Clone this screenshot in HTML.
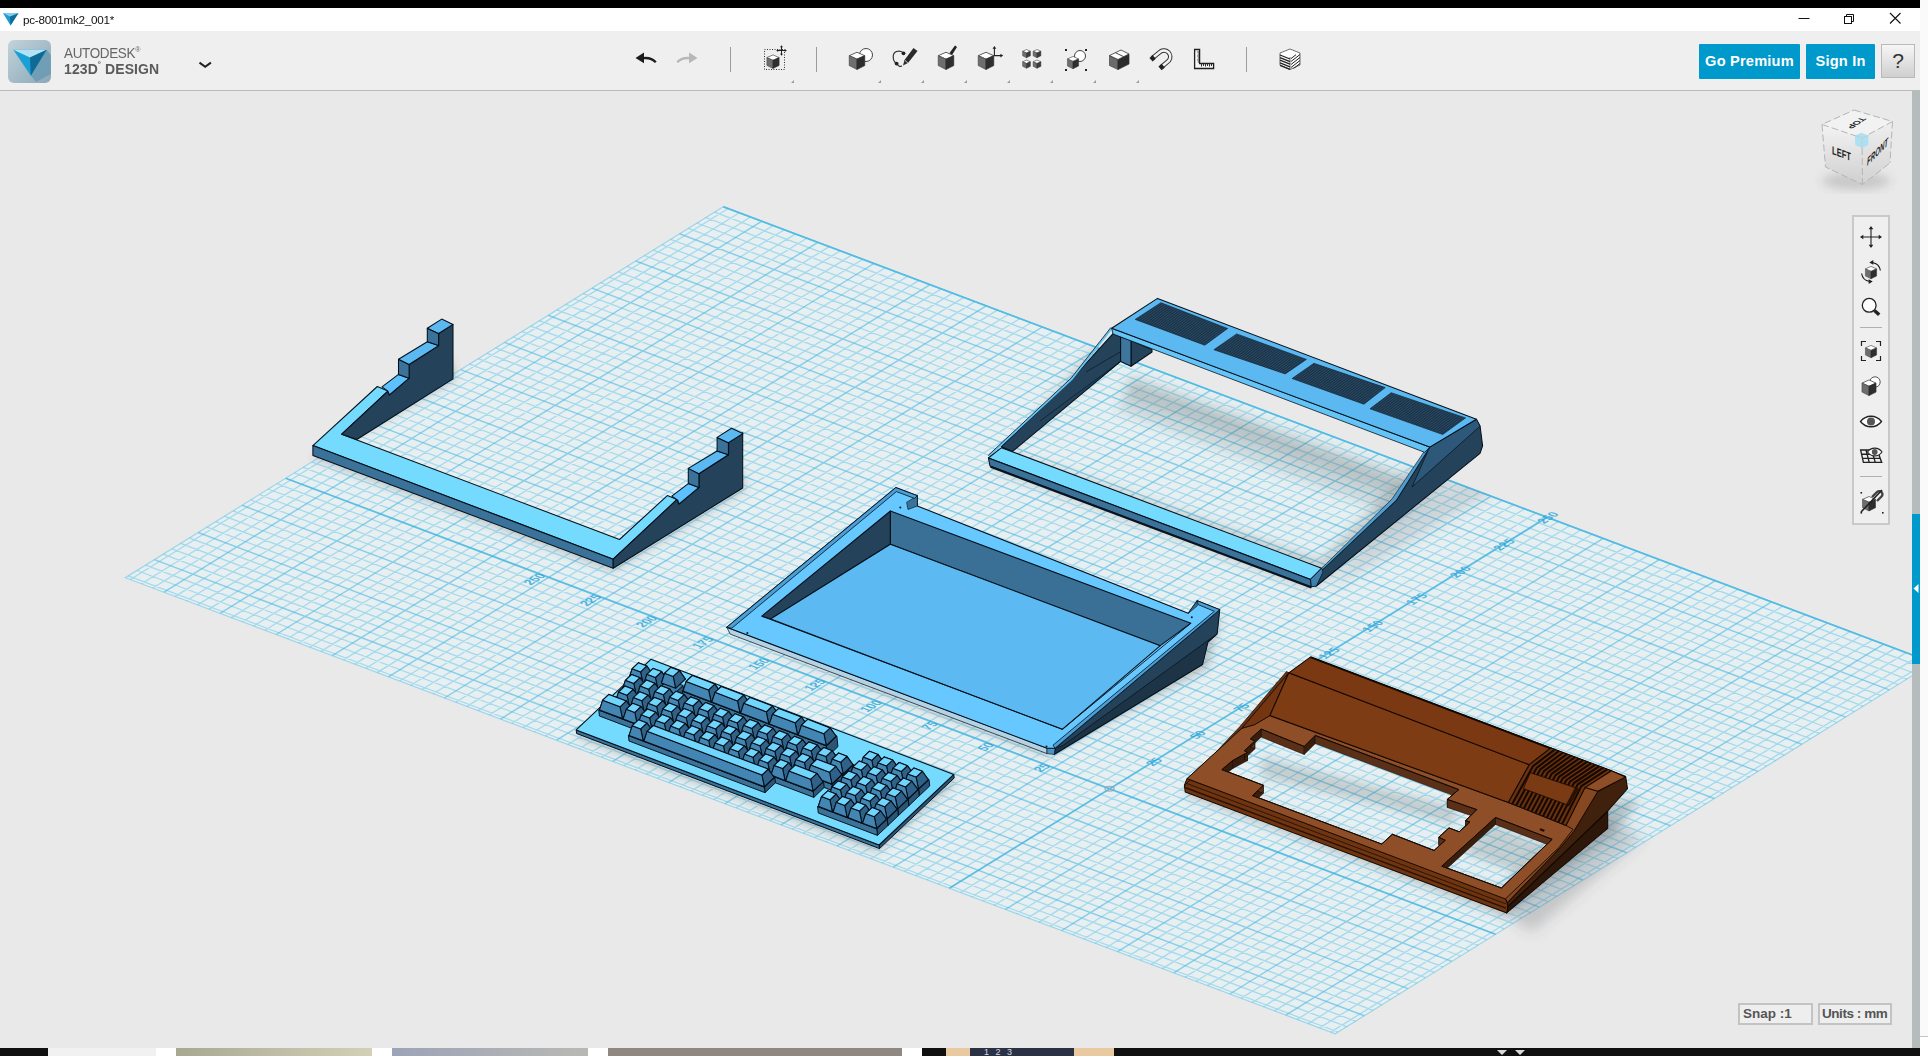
<!DOCTYPE html><html><head><meta charset="utf-8"><title>pc-8001mk2_001*</title><style>
html,body{margin:0;padding:0;}
body{width:1928px;height:1056px;overflow:hidden;position:relative;background:#e9e9e9;font-family:"Liberation Sans",sans-serif;}
.abs{position:absolute;}
#brand1,#brand2,.btn,#help,.sbox,#title .t{will-change:opacity;opacity:.999;}
#blackbar{left:0;top:0;width:1920px;height:8px;background:#000;}
#rstrip{left:1920px;top:0;width:8px;height:1056px;background:#fafafa;}
#title{left:0;top:8px;width:1920px;height:23px;background:#fff;}
#title .t{position:absolute;left:23px;top:5px;font-size:11.7px;color:#111;letter-spacing:-0.25px;}
#toolbar{left:0;top:31px;width:1920px;height:59px;background:#efefef;border-bottom:1px solid #bcbcbc;}
#brand1{left:64px;top:45px;font-size:15.5px;color:#666;letter-spacing:-0.4px;line-height:16px;transform:scaleX(.87);transform-origin:left center;}
#brand2{left:64px;top:61px;font-size:14.5px;color:#5a5a5a;font-weight:bold;letter-spacing:0.1px;line-height:16px;transform:scaleX(.965);transform-origin:left center;}
.btn{top:44px;height:35px;line-height:34px;background:#0099cc;color:#fff;font-weight:bold;font-size:14.6px;text-align:center;border-radius:1px;letter-spacing:0.2px;}
#help{left:1881px;top:44px;width:32px;height:32px;border:1px solid #b9b9b9;background:linear-gradient(#f7f7f7,#cfcfcf);color:#333;font-size:21px;line-height:32px;text-align:center;}
#scroll{left:1912px;top:91px;width:8px;height:957px;background:#b5bdbc;}
#scroll i{position:absolute;left:0;top:423px;width:8px;height:150px;background:#0099cc;}
#nav{left:1852px;top:215px;width:34px;height:306px;border:2px solid #c9c9c9;background:#efefef;}
.sbox{top:1003px;height:18px;border:2px solid #c3c3c3;background:#efefef;font-size:13.5px;font-weight:bold;color:#555;line-height:18px;text-align:left;padding-left:3px;white-space:nowrap;}
#bottom{left:0;top:1048px;width:1920px;height:8px;background:#101010;overflow:hidden;}
#bottom i{position:absolute;top:0;height:8px;}
.gl{font-family:"Liberation Sans",sans-serif;font-size:5.3px;fill:#2fa8da;fill-opacity:.85;font-weight:bold;}
.vc{font-family:"Liberation Sans",sans-serif;font-weight:bold;fill:#222;}
</style></head><body>
<svg class="abs" style="left:0;top:91px" width="1912" height="957" viewBox="0 91 1912 957">
<defs>
<filter id="b3" x="-20%" y="-20%" width="140%" height="140%"><feGaussianBlur stdDeviation="3"/></filter>
<filter id="b4" x="-20%" y="-20%" width="140%" height="140%"><feGaussianBlur stdDeviation="4"/></filter>
<filter id="b5" x="-20%" y="-20%" width="140%" height="140%"><feGaussianBlur stdDeviation="5"/></filter>
<filter id="b6" x="-20%" y="-20%" width="140%" height="140%"><feGaussianBlur stdDeviation="6"/></filter>
<filter id="b7" x="-20%" y="-20%" width="140%" height="140%"><feGaussianBlur stdDeviation="7"/></filter>
<clipPath id="gclip"><polygon points="723.3,206.7 125.4,577.7 1335.2,1033.8 1933.1,662.8"/></clipPath>
<pattern id="mesh" width="2.4" height="2" patternUnits="userSpaceOnUse" patternTransform="matrix(0.93 0.36 -0.8 0.6 0 0)"><rect width="2.4" height="2" fill="#1a3246"/><circle cx="1.2" cy="1" r="0.55" fill="#416f92"/></pattern>
</defs>
<polygon points="723.3,206.7 125.4,577.7 1335.2,1033.8 1933.1,662.8" fill="#e7eff1"/>
<path d="M1330.7 1032.1L1928.6 661.1M1319.5 1027.9L1917.4 656.9M1308.3 1023.6L1906.1 652.6M1297.1 1019.4L1894.9 648.4M1274.6 1010.9L1872.5 640.0M1263.4 1006.7L1861.3 635.7M1252.2 1002.5L1850.0 631.5M1241.0 998.2L1838.8 627.3M1218.5 989.8L1816.4 618.8M1207.3 985.6L1805.2 614.6M1196.1 981.3L1794.0 610.3M1184.9 977.1L1782.7 606.1M1162.4 968.6L1760.3 597.7M1151.2 964.4L1749.1 593.4M1140.0 960.2L1737.9 589.2M1128.8 955.9L1726.6 585.0M1106.3 947.5L1704.2 576.5M1095.1 943.3L1693.0 572.3M1083.9 939.0L1681.8 568.1M1072.7 934.8L1670.6 563.8M1050.2 926.3L1648.1 555.4M1039.0 922.1L1636.9 551.1M1027.8 917.9L1625.7 546.9M1016.6 913.7L1614.5 542.7M994.2 905.2L1592.0 534.2M982.9 901.0L1580.8 530.0M971.7 896.7L1569.6 525.8M960.5 892.5L1558.4 521.5M938.1 884.0L1535.9 513.1M926.8 879.8L1524.7 508.8M915.6 875.6L1513.5 504.6M904.4 871.4L1502.3 500.4M882.0 862.9L1479.8 491.9M870.8 858.7L1468.6 487.7M859.5 854.4L1457.4 483.5M848.3 850.2L1446.2 479.2M825.9 841.8L1423.7 470.8M814.7 837.5L1412.5 466.5M803.4 833.3L1401.3 462.3M792.2 829.1L1390.1 458.1M769.8 820.6L1367.7 449.6M758.6 816.4L1356.4 445.4M747.3 812.1L1345.2 441.2M736.1 807.9L1334.0 436.9M713.7 799.5L1311.6 428.5M702.5 795.2L1300.3 424.3M691.3 791.0L1289.1 420.0M680.0 786.8L1277.9 415.8M657.6 778.3L1255.5 407.3M646.4 774.1L1244.3 403.1M635.2 769.9L1233.0 398.9M623.9 765.6L1221.8 394.6M601.5 757.2L1199.4 386.2M590.3 752.9L1188.2 382.0M579.1 748.7L1176.9 377.7M567.9 744.5L1165.7 373.5M545.4 736.0L1143.3 365.0M534.2 731.8L1132.1 360.8M523.0 727.6L1120.8 356.6M511.8 723.3L1109.6 352.3M489.3 714.9L1087.2 343.9M478.1 710.6L1076.0 339.7M466.9 706.4L1064.8 335.4M455.7 702.2L1053.5 331.2M433.2 693.7L1031.1 322.7M422.0 689.5L1019.9 318.5M410.8 685.3L1008.7 314.3M399.6 681.0L997.4 310.1M377.1 672.6L975.0 301.6M365.9 668.3L963.8 297.4M354.7 664.1L952.6 293.1M343.5 659.9L941.4 288.9M321.0 651.4L918.9 280.4M309.8 647.2L907.7 276.2M298.6 643.0L896.5 272.0M287.4 638.7L885.3 267.8M265.0 630.3L862.8 259.3M253.7 626.0L851.6 255.1M242.5 621.8L840.4 250.8M231.3 617.6L829.2 246.6M208.9 609.1L806.7 238.2M197.6 604.9L795.5 233.9M186.4 600.7L784.3 229.7M175.2 596.4L773.1 225.5M152.8 588.0L750.6 217.0M141.5 583.8L739.4 212.8M130.3 579.5L728.2 208.5M1338.0 1032.0L128.2 575.9M1346.7 1026.6L136.9 570.5M1355.5 1021.2L145.7 565.1M1373.0 1010.3L163.2 554.2M1381.8 1004.9L172.0 548.8M1390.5 999.5L180.7 543.3M1399.3 994.0L189.5 537.9M1416.8 983.2L207.0 527.1M1425.5 977.7L215.7 521.6M1434.3 972.3L224.5 516.2M1443.0 966.9L233.2 510.8M1460.5 956.0L250.7 499.9M1469.3 950.6L259.5 494.5M1478.0 945.2L268.2 489.0M1486.8 939.7L277.0 483.6M1504.3 928.9L294.5 472.8M1513.0 923.4L303.2 467.3M1521.8 918.0L312.0 461.9M1530.5 912.6L320.7 456.5M1548.0 901.7L338.2 445.6M1556.8 896.3L347.0 440.2M1565.5 890.9L355.7 434.7M1574.3 885.4L364.5 429.3M1591.8 874.6L382.0 418.5M1600.5 869.1L390.7 413.0M1609.3 863.7L399.5 407.6M1618.0 858.3L408.2 402.2M1635.5 847.4L425.7 391.3M1644.3 842.0L434.5 385.9M1653.0 836.6L443.2 380.4M1661.8 831.1L452.0 375.0M1679.3 820.3L469.5 364.2M1688.0 814.8L478.2 358.7M1696.8 809.4L487.0 353.3M1705.5 804.0L495.7 347.9M1723.0 793.1L513.2 337.0M1731.8 787.7L522.0 331.6M1740.5 782.3L530.7 326.1M1749.3 776.8L539.5 320.7M1766.8 766.0L557.0 309.9M1775.5 760.5L565.7 304.4M1784.3 755.1L574.5 299.0M1793.1 749.7L583.2 293.6M1810.6 738.8L600.7 282.7M1819.3 733.4L609.5 277.3M1828.1 728.0L618.3 271.8M1836.8 722.5L627.0 266.4M1854.3 711.7L644.5 255.6M1863.1 706.2L653.3 250.1M1871.8 700.8L662.0 244.7M1880.6 695.4L670.8 239.3M1898.1 684.5L688.3 228.4M1906.8 679.1L697.0 223.0M1915.6 673.7L705.8 217.5M1924.3 668.2L714.5 212.1" stroke="#5cc2e8" stroke-width="1.3" stroke-opacity="0.48" fill="none"/>
<path d="M1285.8 1015.2L1883.7 644.2M1229.7 994.0L1827.6 623.0M1173.7 972.9L1771.5 601.9M1117.6 951.7L1715.4 580.7M1061.5 930.6L1659.3 559.6M1005.4 909.4L1603.2 538.4M893.2 867.1L1491.1 496.2M837.1 846.0L1435.0 475.0M781.0 824.8L1378.9 453.9M724.9 803.7L1322.8 432.7M668.8 782.5L1266.7 411.6M612.7 761.4L1210.6 390.4M556.6 740.2L1154.5 369.3M500.5 719.1L1098.4 348.1M444.4 698.0L1042.3 327.0M388.4 676.8L986.2 305.8M332.3 655.7L930.1 284.7M276.2 634.5L874.0 263.5M220.1 613.4L817.9 242.4M164.0 592.2L761.9 221.2M1364.3 1015.7L154.4 559.6M1408.0 988.6L198.2 532.5M1451.8 961.4L242.0 505.3M1539.3 907.1L329.5 451.0M1583.0 880.0L373.2 423.9M1626.8 852.8L417.0 396.7M1670.5 825.7L460.7 369.6M1714.3 798.5L504.5 342.4M1758.0 771.4L548.2 315.3M1801.8 744.2L592.0 288.1M1845.6 717.1L635.8 261.0M1889.3 689.9L679.5 233.8M1933.1 662.8L723.3 206.7" stroke="#4bbae4" stroke-width="1.45" stroke-opacity="0.62" fill="none"/>
<path d="M949.3 888.3L1547.1 517.3M1495.5 934.3L285.7 478.2" stroke="#42b5e2" stroke-width="1.75" stroke-opacity="0.85" fill="none"/>
<polygon points="723.3,206.7 125.4,577.7 1335.2,1033.8 1933.1,662.8" fill="none" stroke="#5cc2e8" stroke-width="1.2" stroke-opacity="0.55"/>
<path d="M1933.1 662.8L723.3 206.7" stroke="#4bbae4" stroke-width="1.7" stroke-opacity="0.85"/>
<ellipse cx="1109.6" cy="788.8" rx="4.6" ry="2.3" fill="none" stroke="#8fa3b5" stroke-width="1.3" stroke-opacity="0.8"/>
<text transform="matrix(1.7502 -1.0860 2.2437 0.8459 1051.1 766.2)" text-anchor="end" class="gl">25</text>
<text transform="matrix(1.7502 -1.0860 2.2437 0.8459 1158.1 763.4)" text-anchor="middle" class="gl">25</text>
<text transform="matrix(1.7502 -1.0860 2.2437 0.8459 995.0 745.1)" text-anchor="end" class="gl">50</text>
<text transform="matrix(1.7502 -1.0860 2.2437 0.8459 1201.8 736.3)" text-anchor="middle" class="gl">50</text>
<text transform="matrix(1.7502 -1.0860 2.2437 0.8459 938.9 723.9)" text-anchor="end" class="gl">75</text>
<text transform="matrix(1.7502 -1.0860 2.2437 0.8459 1245.6 709.1)" text-anchor="middle" class="gl">75</text>
<text transform="matrix(1.7502 -1.0860 2.2437 0.8459 882.8 702.8)" text-anchor="end" class="gl">100</text>
<text transform="matrix(1.7502 -1.0860 2.2437 0.8459 1289.3 682.0)" text-anchor="middle" class="gl">100</text>
<text transform="matrix(1.7502 -1.0860 2.2437 0.8459 826.7 681.6)" text-anchor="end" class="gl">125</text>
<text transform="matrix(1.7502 -1.0860 2.2437 0.8459 1333.1 654.8)" text-anchor="middle" class="gl">125</text>
<text transform="matrix(1.7502 -1.0860 2.2437 0.8459 770.7 660.5)" text-anchor="end" class="gl">150</text>
<text transform="matrix(1.7502 -1.0860 2.2437 0.8459 1376.8 627.7)" text-anchor="middle" class="gl">150</text>
<text transform="matrix(1.7502 -1.0860 2.2437 0.8459 714.6 639.3)" text-anchor="end" class="gl">175</text>
<text transform="matrix(1.7502 -1.0860 2.2437 0.8459 1420.6 600.5)" text-anchor="middle" class="gl">175</text>
<text transform="matrix(1.7502 -1.0860 2.2437 0.8459 658.5 618.2)" text-anchor="end" class="gl">200</text>
<text transform="matrix(1.7502 -1.0860 2.2437 0.8459 1464.4 573.4)" text-anchor="middle" class="gl">200</text>
<text transform="matrix(1.7502 -1.0860 2.2437 0.8459 602.4 597.0)" text-anchor="end" class="gl">225</text>
<text transform="matrix(1.7502 -1.0860 2.2437 0.8459 1508.1 546.2)" text-anchor="middle" class="gl">225</text>
<text transform="matrix(1.7502 -1.0860 2.2437 0.8459 546.3 575.9)" text-anchor="end" class="gl">250</text>
<text transform="matrix(1.7502 -1.0860 2.2437 0.8459 1551.9 519.1)" text-anchor="middle" class="gl">250</text>
<g>
<g><polygon points="313.0,458.0 613.0,571.0 745.0,490.0 742.0,470.0 620.0,548.0 345.0,444.0 455.0,380.0 452.0,360.0" fill="#4a5258" fill-opacity="0.3" filter="url(#b4)"/></g>
<g clip-path="url(#gclip)"><polygon points="990.0,468.0 1312.0,590.0 1486.0,452.0 1440.0,440.0 1320.0,560.0 1010.0,452.0 1125.0,350.0 1100.0,340.0" fill="#4a5258" fill-opacity="0.22" filter="url(#b5)"/></g>
<g><polygon points="1131.0,376.0 1408.0,476.0 1388.0,512.0 1118.0,410.0" fill="#4a5258" fill-opacity="0.17" filter="url(#b6)"/></g>
<g><polygon points="1131.0,380.0 1406.0,480.0 1398.0,496.0 1126.0,396.0" fill="#4a5258" fill-opacity="0.14" filter="url(#b4)"/></g>
<g clip-path="url(#gclip)"><polygon points="1400.0,505.0 1490.0,470.0 1500.0,488.0 1330.0,590.0" fill="#4a5258" fill-opacity="0.16" filter="url(#b6)"/></g>
<g><polygon points="727.0,634.0 1048.0,756.0 1208.0,668.0 1222.0,615.0 1190.0,640.0 1050.0,740.0" fill="#4a5258" fill-opacity="0.3" filter="url(#b4)"/></g>
<g><polygon points="574.0,736.0 878.0,852.0 958.0,780.0 930.0,770.0 870.0,830.0 590.0,730.0" fill="#4a5258" fill-opacity="0.3" filter="url(#b4)"/></g>
<g clip-path="url(#gclip)"><polygon points="1184.0,794.0 1506.0,917.0 1612.0,835.0 1640.0,800.0 1590.0,800.0 1500.0,890.0 1200.0,780.0" fill="#4a5258" fill-opacity="0.3" filter="url(#b5)"/></g>
<g><polygon points="1606.0,814.0 1642.0,838.0 1532.0,932.0 1503.0,912.0" fill="#4a5258" fill-opacity="0.24" filter="url(#b7)"/></g>
<g><polygon points="1262.0,757.0 1456.0,807.0 1456.0,825.0 1262.0,777.0" fill="#4a5258" fill-opacity="0.22" filter="url(#b4)"/></g>
<g><polygon points="1462.0,852.0 1520.0,874.0 1545.0,846.0 1492.0,824.0" fill="#4a5258" fill-opacity="0.22" filter="url(#b4)"/></g>
</g>
<polygon points="312.9,445.6 377.3,386.5 387.9,391.1 341.7,434.2 619.5,539.5 667.3,495.6 677.1,499.4 613.2,559.2" fill="#74dafe" stroke="#04101a" stroke-width="1.05" stroke-linejoin="round" />
<polygon points="312.9,445.6 613.2,559.2 613.2,568.3 312.9,455.5" fill="#3b7299" stroke="#04101a" stroke-width="1.05" stroke-linejoin="round" />
<polygon points="341.7,434.2 387.9,391.1 389.4,394.8 409.1,378.2 409.1,364.5 438.6,345.6 438.6,333.5 453.0,324.4 453.0,378.9 356.8,439.5" fill="#24425a" stroke="#04101a" stroke-width="1.05" stroke-linejoin="round" />
<polygon points="382.0,386.9 398.5,374.4 409.1,378.2 389.4,394.8 387.9,391.1" fill="#5dc0ff" stroke="#04101a" stroke-width="1.05" stroke-linejoin="round" />
<polygon points="398.5,359.2 409.1,364.5 409.1,378.2 398.5,374.4" fill="#3b7299" stroke="#04101a" stroke-width="1.05" stroke-linejoin="round" />
<polygon points="398.5,359.2 427.3,341.8 438.6,345.6 409.1,364.5" fill="#5cb8f0" stroke="#04101a" stroke-width="1.05" stroke-linejoin="round" />
<polygon points="427.3,328.2 438.6,333.5 438.6,345.6 427.3,341.8" fill="#3b7299" stroke="#04101a" stroke-width="1.05" stroke-linejoin="round" />
<polygon points="441.7,319.1 453.0,324.4 438.6,333.5 427.3,328.2" fill="#5cb8f0" stroke="#04101a" stroke-width="1.05" stroke-linejoin="round" />
<polygon points="613.2,559.2 677.1,499.4 678.6,503.9 699.1,487.3 699.1,473.6 728.6,454.7 728.6,441.8 742.7,432.7 742.7,488.0 613.2,568.3" fill="#24425a" stroke="#04101a" stroke-width="1.05" stroke-linejoin="round" />
<polygon points="671.8,496.1 688.3,483.6 698.9,487.4 679.2,504.0 677.7,500.3" fill="#5dc0ff" stroke="#04101a" stroke-width="1.05" stroke-linejoin="round" />
<polygon points="688.3,468.4 698.9,473.7 698.9,487.4 688.3,483.6" fill="#3b7299" stroke="#04101a" stroke-width="1.05" stroke-linejoin="round" />
<polygon points="688.3,468.4 717.1,451.0 728.4,454.8 698.9,473.7" fill="#5cb8f0" stroke="#04101a" stroke-width="1.05" stroke-linejoin="round" />
<polygon points="717.1,437.4 728.4,442.7 728.4,454.8 717.1,451.0" fill="#3b7299" stroke="#04101a" stroke-width="1.05" stroke-linejoin="round" />
<polygon points="731.5,428.3 742.8,433.6 728.4,442.7 717.1,437.4" fill="#5cb8f0" stroke="#04101a" stroke-width="1.05" stroke-linejoin="round" />
<polygon points="1476.4,419.3 1480.1,426.2 1482.6,445.9 1480.0,453.3 1316.4,586.0 1311.4,586.3 1313.9,577.7 1396.4,500.1 1429.7,447.1" fill="#24425a" stroke="#04101a" stroke-width="1.05" stroke-linejoin="round" />
<polygon points="1429.7,447.1 1476.4,419.3 1480.1,426.2 1412.0,487.0" fill="#2d587a" stroke="#04101a" stroke-width="0.7" stroke-linejoin="round" />
<polygon points="1424.7,450.8 1429.7,447.1 1396.4,500.1 1313.9,577.7 1321.7,568.2 1392.0,499.0" fill="#4f9cd0" stroke="#04101a" stroke-width="0.6" stroke-linejoin="round" />
<polygon points="1113.0,333.6 1120.6,336.8 1120.6,361.4 1012.6,451.4 1001.3,446.7 1072.3,378.5" fill="#24425a" stroke="#04101a" stroke-width="1.05" stroke-linejoin="round" />
<line x1="1120.6" y1="361.4" x2="1040.0" y2="421.0" stroke="#04101a" stroke-width="0.6" />
<line x1="1120.0" y1="352.0" x2="1086.0" y2="372.0" stroke="#04101a" stroke-width="0.6" />
<polyline points="1111.7,328.3 1072.3,378.5 988.9,456.1" fill="none" stroke="#63c4f8" stroke-width="2.0" stroke-linejoin="round" />
<polyline points="1110.9,327.5 1071.3,377.9 988.2,455.4" fill="none" stroke="#04101a" stroke-width="0.8" stroke-linejoin="round" />
<polygon points="1131.0,340.6 1152.0,349.5 1152.0,352.0 1131.0,366.2" fill="#24425a" stroke="#04101a" stroke-width="1.05" stroke-linejoin="round" />
<polygon points="1120.6,336.8 1131.0,340.6 1131.0,366.2 1120.6,361.4" fill="#3d759d" stroke="#04101a" stroke-width="1.05" stroke-linejoin="round" />
<polygon points="1111.7,328.3 1429.7,447.1 1424.7,452.3 1113.0,334.0" fill="#63c4f8" stroke="#04101a" stroke-width="0.8" stroke-linejoin="round" />
<polygon points="1157.5,298.4 1476.4,419.3 1429.7,447.1 1111.7,328.3" fill="#5cb8f0" stroke="#04101a" stroke-width="1.05" stroke-linejoin="round" />
<polygon points="1135.2,319.4 1160.9,302.7 1227.6,328.5 1204.8,345.2" fill="url(#mesh)" stroke="#142838" stroke-width="0.7" stroke-linejoin="round" />
<polygon points="1213.9,349.7 1236.7,333.9 1306.4,359.4 1285.2,373.9" fill="url(#mesh)" stroke="#142838" stroke-width="0.7" stroke-linejoin="round" />
<polygon points="1292.1,378.5 1313.9,363.3 1385.2,387.6 1363.9,404.2" fill="url(#mesh)" stroke="#142838" stroke-width="0.7" stroke-linejoin="round" />
<polygon points="1370.0,408.8 1391.2,392.7 1465.5,417.9 1442.7,434.5" fill="url(#mesh)" stroke="#142838" stroke-width="0.7" stroke-linejoin="round" />
<polygon points="988.4,458.0 1001.5,447.7 1321.7,568.2 1310.5,579.4" fill="#74dafe" stroke="#04101a" stroke-width="1.05" stroke-linejoin="round" />
<polygon points="988.4,458.0 1310.5,579.4 1311.4,586.8 990.0,466.0" fill="#3b7299" stroke="#04101a" stroke-width="1.05" stroke-linejoin="round" />
<line x1="990.5" y1="466.8" x2="1311.4" y2="587.6" stroke="#08141e" stroke-width="2.0" />
<polygon points="1310.5,579.4 1321.7,568.2 1323.0,572.0 1316.4,586.0 1311.4,586.8" fill="#3f7fae" stroke="#04101a" stroke-width="0.7" stroke-linejoin="round" />
<polygon points="1219.7,609.7 1217.0,634.0 1208.0,642.0 1202.6,664.5 1054.2,754.5 1055.1,748.2 1215.2,612.4" fill="#1d3346" stroke="#04101a" stroke-width="1.05" stroke-linejoin="round" />
<polygon points="1215.2,612.4 1219.7,609.7 1217.0,634.0 1063.0,745.5 1055.1,748.2" fill="#24425a" stroke="#04101a" stroke-width="0.7" stroke-linejoin="round" />
<polygon points="726.7,627.3 1047.0,748.2 1047.0,753.6 730.3,634.2" fill="#b4d2e6" stroke="#04101a" stroke-width="0.7" stroke-linejoin="round" />
<polygon points="1047.0,748.2 1055.1,748.2 1054.2,754.5 1047.0,753.6" fill="#4a94c8" stroke="#04101a" stroke-width="0.6" stroke-linejoin="round" />
<polygon points="726.7,627.3 895.8,487.6 917.4,495.7 917.4,506.0 1188.2,613.3 1197.2,600.7 1219.7,609.7 1055.1,748.2 1047.0,748.2" fill="#66c8ff" stroke="#04101a" stroke-width="1.05" stroke-linejoin="round" />
<polygon points="917.4,495.7 917.4,506.0 908.0,509.5 906.6,502.3" fill="#3b7299" stroke="#04101a" stroke-width="0.6" stroke-linejoin="round" />
<polygon points="1188.2,613.3 1197.2,600.7 1197.2,606.0" fill="#3b7299" stroke="#04101a" stroke-width="0.6" stroke-linejoin="round" />
<polygon points="726.7,627.3 895.8,487.6 917.4,495.7 914.5,498.4 896.4,491.6 731.8,628.2" fill="#4c9fd6" stroke="#04101a" stroke-width="0.8" stroke-linejoin="round" />
<polygon points="1197.2,600.7 1219.7,609.7 1055.1,748.2 1053.0,745.2 1214.3,611.3 1198.2,604.6" fill="#4c9fd6" stroke="#04101a" stroke-width="0.8" stroke-linejoin="round" />
<circle cx="900.3" cy="507.4" r="1" fill="#0a1822"/>
<circle cx="1191.8" cy="617.2" r="1" fill="#0a1822"/>
<circle cx="747.4" cy="633.0" r="1" fill="#0a1822"/>
<circle cx="1046.5" cy="746.5" r="1" fill="#0a1822"/>
<polygon points="761.8,616.2 890.4,511.0 890.4,544.3 770.8,618.9" fill="#24425a" stroke="#04101a" stroke-width="1.05" stroke-linejoin="round" />
<polygon points="890.4,511.0 1190.9,623.2 1160.3,645.7 890.4,544.3" fill="#3a7096" stroke="#04101a" stroke-width="1.05" stroke-linejoin="round" />
<polygon points="770.8,618.9 890.4,544.3 1160.3,645.7 1062.3,729.3" fill="#5db9f1" stroke="#04101a" stroke-width="1.05" stroke-linejoin="round" />
<polyline points="761.8,616.2 1062.3,729.3 1190.9,623.2" fill="none" stroke="#04101a" stroke-width="0.9" stroke-linejoin="round" />
<polygon points="879.1,845.0 953.8,774.4 954.2,778.0 879.5,848.6" fill="#2a5577" stroke="#050f18" stroke-width="1.0" stroke-linejoin="round" />
<polygon points="576.2,729.9 879.1,845.0 879.5,848.6 576.6,733.5" fill="#3b7299" stroke="#050f18" stroke-width="1.0" stroke-linejoin="round" />
<polygon points="576.2,729.9 879.1,845.0 953.8,774.4 650.9,659.3" fill="#74dafe" stroke="#050f18" stroke-width="1.05" stroke-linejoin="round" />
<polygon points="673.3,702.5 683.8,692.6 683.1,685.5 672.6,695.4" fill="#2a5577" stroke="#050f18" stroke-width="0.95" stroke-linejoin="round" />
<polygon points="629.0,685.6 673.3,702.5 672.6,695.4 628.3,678.5" fill="#3b7299" stroke="#050f18" stroke-width="0.95" stroke-linejoin="round" />
<polygon points="628.3,678.5 672.6,695.4 683.1,685.5 638.7,668.6" fill="#3f7dab" stroke="#050f18" stroke-width="0.95" stroke-linejoin="round" />
<polygon points="827.5,756.6 837.9,746.7 836.9,736.1 826.4,746.0" fill="#2a5577" stroke="#050f18" stroke-width="0.95" stroke-linejoin="round" />
<polygon points="683.4,701.8 827.5,756.6 826.4,746.0 682.3,691.2" fill="#3b7299" stroke="#050f18" stroke-width="0.95" stroke-linejoin="round" />
<polygon points="682.3,691.2 826.4,746.0 836.9,736.1 692.8,681.3" fill="#3f7dab" stroke="#050f18" stroke-width="0.95" stroke-linejoin="round" />
<polygon points="638.8,669.1 652.9,674.4 646.8,666.0 638.4,662.8" fill="#3c79a6" stroke="#050f18" stroke-width="1.05" stroke-linejoin="round" />
<polygon points="628.9,678.4 638.8,669.1 638.4,662.8 632.2,668.7" fill="#3c79a6" stroke="#050f18" stroke-width="1.05" stroke-linejoin="round" />
<polygon points="643.0,683.7 652.9,674.4 646.8,666.0 640.6,671.9" fill="#2f6189" stroke="#050f18" stroke-width="1.05" stroke-linejoin="round" />
<polygon points="628.9,678.4 643.0,683.7 640.6,671.9 632.2,668.7" fill="#4385b3" stroke="#050f18" stroke-width="1.05" stroke-linejoin="round" />
<polygon points="632.2,668.7 640.6,671.9 646.8,666.0 638.4,662.8" fill="#70d6fd" stroke="#050f18" stroke-width="1.05" stroke-linejoin="round" />
<polygon points="653.6,674.7 667.6,680.0 661.6,671.6 653.1,668.4" fill="#3c79a6" stroke="#050f18" stroke-width="1.05" stroke-linejoin="round" />
<polygon points="643.7,684.0 653.6,674.7 653.1,668.4 646.9,674.3" fill="#3c79a6" stroke="#050f18" stroke-width="1.05" stroke-linejoin="round" />
<polygon points="657.8,689.3 667.6,680.0 661.6,671.6 655.4,677.5" fill="#2f6189" stroke="#050f18" stroke-width="1.05" stroke-linejoin="round" />
<polygon points="643.7,684.0 657.8,689.3 655.4,677.5 646.9,674.3" fill="#4385b3" stroke="#050f18" stroke-width="1.05" stroke-linejoin="round" />
<polygon points="646.9,674.3 655.4,677.5 661.6,671.6 653.1,668.4" fill="#70d6fd" stroke="#050f18" stroke-width="1.05" stroke-linejoin="round" />
<polygon points="671.4,673.6 685.4,679.0 679.4,670.6 670.9,667.4" fill="#3c79a6" stroke="#050f18" stroke-width="1.05" stroke-linejoin="round" />
<polygon points="661.5,682.9 671.4,673.6 670.9,667.4 664.7,673.2" fill="#3c79a6" stroke="#050f18" stroke-width="1.05" stroke-linejoin="round" />
<polygon points="675.6,688.3 685.4,679.0 679.4,670.6 673.2,676.4" fill="#2f6189" stroke="#050f18" stroke-width="1.05" stroke-linejoin="round" />
<polygon points="661.5,682.9 675.6,688.3 673.2,676.4 664.7,673.2" fill="#4385b3" stroke="#050f18" stroke-width="1.05" stroke-linejoin="round" />
<polygon points="664.7,673.2 673.2,676.4 679.4,670.6 670.9,667.4" fill="#70d6fd" stroke="#050f18" stroke-width="1.05" stroke-linejoin="round" />
<polygon points="692.8,681.8 720.9,692.4 714.8,684.1 692.4,675.5" fill="#3c79a6" stroke="#050f18" stroke-width="1.05" stroke-linejoin="round" />
<polygon points="683.0,691.1 692.8,681.8 692.4,675.5 686.2,681.4" fill="#3c79a6" stroke="#050f18" stroke-width="1.05" stroke-linejoin="round" />
<polygon points="711.1,701.8 720.9,692.4 714.8,684.1 708.6,689.9" fill="#2f6189" stroke="#050f18" stroke-width="1.05" stroke-linejoin="round" />
<polygon points="683.0,691.1 711.1,701.8 708.6,689.9 686.2,681.4" fill="#4385b3" stroke="#050f18" stroke-width="1.05" stroke-linejoin="round" />
<polygon points="686.2,681.4 708.6,689.9 714.8,684.1 692.4,675.5" fill="#70d6fd" stroke="#050f18" stroke-width="1.05" stroke-linejoin="round" />
<polygon points="721.6,692.7 749.7,703.4 743.7,695.0 721.2,686.5" fill="#3c79a6" stroke="#050f18" stroke-width="1.05" stroke-linejoin="round" />
<polygon points="711.8,702.0 721.6,692.7 721.2,686.5 715.0,692.3" fill="#3c79a6" stroke="#050f18" stroke-width="1.05" stroke-linejoin="round" />
<polygon points="739.9,712.7 749.7,703.4 743.7,695.0 737.5,700.9" fill="#2f6189" stroke="#050f18" stroke-width="1.05" stroke-linejoin="round" />
<polygon points="711.8,702.0 739.9,712.7 737.5,700.9 715.0,692.3" fill="#4385b3" stroke="#050f18" stroke-width="1.05" stroke-linejoin="round" />
<polygon points="715.0,692.3 737.5,700.9 743.7,695.0 721.2,686.5" fill="#70d6fd" stroke="#050f18" stroke-width="1.05" stroke-linejoin="round" />
<polygon points="750.5,703.7 778.6,714.3 772.5,706.0 750.0,697.4" fill="#3c79a6" stroke="#050f18" stroke-width="1.05" stroke-linejoin="round" />
<polygon points="740.6,713.0 750.5,703.7 750.0,697.4 743.8,703.3" fill="#3c79a6" stroke="#050f18" stroke-width="1.05" stroke-linejoin="round" />
<polygon points="768.7,723.7 778.6,714.3 772.5,706.0 766.3,711.8" fill="#2f6189" stroke="#050f18" stroke-width="1.05" stroke-linejoin="round" />
<polygon points="740.6,713.0 768.7,723.7 766.3,711.8 743.8,703.3" fill="#4385b3" stroke="#050f18" stroke-width="1.05" stroke-linejoin="round" />
<polygon points="743.8,703.3 766.3,711.8 772.5,706.0 750.0,697.4" fill="#70d6fd" stroke="#050f18" stroke-width="1.05" stroke-linejoin="round" />
<polygon points="779.3,714.6 807.4,725.3 801.3,716.9 778.8,708.4" fill="#3c79a6" stroke="#050f18" stroke-width="1.05" stroke-linejoin="round" />
<polygon points="769.4,723.9 779.3,714.6 778.8,708.4 772.6,714.2" fill="#3c79a6" stroke="#050f18" stroke-width="1.05" stroke-linejoin="round" />
<polygon points="797.5,734.6 807.4,725.3 801.3,716.9 795.1,722.8" fill="#2f6189" stroke="#050f18" stroke-width="1.05" stroke-linejoin="round" />
<polygon points="769.4,723.9 797.5,734.6 795.1,722.8 772.6,714.2" fill="#4385b3" stroke="#050f18" stroke-width="1.05" stroke-linejoin="round" />
<polygon points="772.6,714.2 795.1,722.8 801.3,716.9 778.8,708.4" fill="#70d6fd" stroke="#050f18" stroke-width="1.05" stroke-linejoin="round" />
<polygon points="808.1,725.6 836.2,736.2 830.1,727.9 807.7,719.3" fill="#3c79a6" stroke="#050f18" stroke-width="1.05" stroke-linejoin="round" />
<polygon points="798.3,734.9 808.1,725.6 807.7,719.3 801.5,725.2" fill="#3c79a6" stroke="#050f18" stroke-width="1.05" stroke-linejoin="round" />
<polygon points="826.3,745.6 836.2,736.2 830.1,727.9 823.9,733.7" fill="#2f6189" stroke="#050f18" stroke-width="1.05" stroke-linejoin="round" />
<polygon points="798.3,734.9 826.3,745.6 823.9,733.7 801.5,725.2" fill="#4385b3" stroke="#050f18" stroke-width="1.05" stroke-linejoin="round" />
<polygon points="801.5,725.2 823.9,733.7 830.1,727.9 807.7,719.3" fill="#70d6fd" stroke="#050f18" stroke-width="1.05" stroke-linejoin="round" />
<polygon points="843.9,781.1 854.4,771.3 853.7,764.6 843.2,774.4" fill="#2a5577" stroke="#050f18" stroke-width="0.95" stroke-linejoin="round" />
<polygon points="622.2,696.9 843.9,781.1 843.2,774.4 621.5,690.2" fill="#3b7299" stroke="#050f18" stroke-width="0.95" stroke-linejoin="round" />
<polygon points="621.5,690.2 843.2,774.4 853.7,764.6 632.0,680.3" fill="#3f7dab" stroke="#050f18" stroke-width="0.95" stroke-linejoin="round" />
<polygon points="632.0,680.7 646.1,686.1 640.0,677.7 631.6,674.5" fill="#3c79a6" stroke="#050f18" stroke-width="1.05" stroke-linejoin="round" />
<polygon points="622.2,690.0 632.0,680.7 631.6,674.5 625.4,680.3" fill="#3c79a6" stroke="#050f18" stroke-width="1.05" stroke-linejoin="round" />
<polygon points="636.2,695.4 646.1,686.1 640.0,677.7 633.8,683.5" fill="#2f6189" stroke="#050f18" stroke-width="1.05" stroke-linejoin="round" />
<polygon points="622.2,690.0 636.2,695.4 633.8,683.5 625.4,680.3" fill="#4385b3" stroke="#050f18" stroke-width="1.05" stroke-linejoin="round" />
<polygon points="625.4,680.3 633.8,683.5 640.0,677.7 631.6,674.5" fill="#70d6fd" stroke="#050f18" stroke-width="1.05" stroke-linejoin="round" />
<polygon points="646.8,686.3 660.9,691.7 654.8,683.3 646.4,680.1" fill="#3c79a6" stroke="#050f18" stroke-width="1.05" stroke-linejoin="round" />
<polygon points="636.9,695.7 646.8,686.3 646.4,680.1 640.2,686.0" fill="#3c79a6" stroke="#050f18" stroke-width="1.05" stroke-linejoin="round" />
<polygon points="651.0,701.0 660.9,691.7 654.8,683.3 648.6,689.2" fill="#2f6189" stroke="#050f18" stroke-width="1.05" stroke-linejoin="round" />
<polygon points="636.9,695.7 651.0,701.0 648.6,689.2 640.2,686.0" fill="#4385b3" stroke="#050f18" stroke-width="1.05" stroke-linejoin="round" />
<polygon points="640.2,686.0 648.6,689.2 654.8,683.3 646.4,680.1" fill="#70d6fd" stroke="#050f18" stroke-width="1.05" stroke-linejoin="round" />
<polygon points="661.6,692.0 675.6,697.3 669.6,688.9 661.1,685.7" fill="#3c79a6" stroke="#050f18" stroke-width="1.05" stroke-linejoin="round" />
<polygon points="651.7,701.3 661.6,692.0 661.1,685.7 654.9,691.6" fill="#3c79a6" stroke="#050f18" stroke-width="1.05" stroke-linejoin="round" />
<polygon points="665.8,706.6 675.6,697.3 669.6,688.9 663.4,694.8" fill="#2f6189" stroke="#050f18" stroke-width="1.05" stroke-linejoin="round" />
<polygon points="651.7,701.3 665.8,706.6 663.4,694.8 654.9,691.6" fill="#4385b3" stroke="#050f18" stroke-width="1.05" stroke-linejoin="round" />
<polygon points="654.9,691.6 663.4,694.8 669.6,688.9 661.1,685.7" fill="#70d6fd" stroke="#050f18" stroke-width="1.05" stroke-linejoin="round" />
<polygon points="676.4,697.6 690.4,702.9 684.3,694.5 675.9,691.3" fill="#3c79a6" stroke="#050f18" stroke-width="1.05" stroke-linejoin="round" />
<polygon points="666.5,706.9 676.4,697.6 675.9,691.3 669.7,697.2" fill="#3c79a6" stroke="#050f18" stroke-width="1.05" stroke-linejoin="round" />
<polygon points="680.6,712.2 690.4,702.9 684.3,694.5 678.1,700.4" fill="#2f6189" stroke="#050f18" stroke-width="1.05" stroke-linejoin="round" />
<polygon points="666.5,706.9 680.6,712.2 678.1,700.4 669.7,697.2" fill="#4385b3" stroke="#050f18" stroke-width="1.05" stroke-linejoin="round" />
<polygon points="669.7,697.2 678.1,700.4 684.3,694.5 675.9,691.3" fill="#70d6fd" stroke="#050f18" stroke-width="1.05" stroke-linejoin="round" />
<polygon points="691.2,703.2 705.2,708.5 699.1,700.1 690.7,696.9" fill="#3c79a6" stroke="#050f18" stroke-width="1.05" stroke-linejoin="round" />
<polygon points="681.3,712.5 691.2,703.2 690.7,696.9 684.5,702.8" fill="#3c79a6" stroke="#050f18" stroke-width="1.05" stroke-linejoin="round" />
<polygon points="695.3,717.9 705.2,708.5 699.1,700.1 692.9,706.0" fill="#2f6189" stroke="#050f18" stroke-width="1.05" stroke-linejoin="round" />
<polygon points="681.3,712.5 695.3,717.9 692.9,706.0 684.5,702.8" fill="#4385b3" stroke="#050f18" stroke-width="1.05" stroke-linejoin="round" />
<polygon points="684.5,702.8 692.9,706.0 699.1,700.1 690.7,696.9" fill="#70d6fd" stroke="#050f18" stroke-width="1.05" stroke-linejoin="round" />
<polygon points="705.9,708.8 720.0,714.1 713.9,705.8 705.5,702.6" fill="#3c79a6" stroke="#050f18" stroke-width="1.05" stroke-linejoin="round" />
<polygon points="696.1,718.1 705.9,708.8 705.5,702.6 699.3,708.4" fill="#3c79a6" stroke="#050f18" stroke-width="1.05" stroke-linejoin="round" />
<polygon points="710.1,723.5 720.0,714.1 713.9,705.8 707.7,711.6" fill="#2f6189" stroke="#050f18" stroke-width="1.05" stroke-linejoin="round" />
<polygon points="696.1,718.1 710.1,723.5 707.7,711.6 699.3,708.4" fill="#4385b3" stroke="#050f18" stroke-width="1.05" stroke-linejoin="round" />
<polygon points="699.3,708.4 707.7,711.6 713.9,705.8 705.5,702.6" fill="#70d6fd" stroke="#050f18" stroke-width="1.05" stroke-linejoin="round" />
<polygon points="720.7,714.4 734.8,719.8 728.7,711.4 720.3,708.2" fill="#3c79a6" stroke="#050f18" stroke-width="1.05" stroke-linejoin="round" />
<polygon points="710.9,723.7 720.7,714.4 720.3,708.2 714.1,714.0" fill="#3c79a6" stroke="#050f18" stroke-width="1.05" stroke-linejoin="round" />
<polygon points="724.9,729.1 734.8,719.8 728.7,711.4 722.5,717.2" fill="#2f6189" stroke="#050f18" stroke-width="1.05" stroke-linejoin="round" />
<polygon points="710.9,723.7 724.9,729.1 722.5,717.2 714.1,714.0" fill="#4385b3" stroke="#050f18" stroke-width="1.05" stroke-linejoin="round" />
<polygon points="714.1,714.0 722.5,717.2 728.7,711.4 720.3,708.2" fill="#70d6fd" stroke="#050f18" stroke-width="1.05" stroke-linejoin="round" />
<polygon points="735.5,720.0 749.6,725.4 743.5,717.0 735.0,713.8" fill="#3c79a6" stroke="#050f18" stroke-width="1.05" stroke-linejoin="round" />
<polygon points="725.6,729.4 735.5,720.0 735.0,713.8 728.8,719.7" fill="#3c79a6" stroke="#050f18" stroke-width="1.05" stroke-linejoin="round" />
<polygon points="739.7,734.7 749.6,725.4 743.5,717.0 737.3,722.9" fill="#2f6189" stroke="#050f18" stroke-width="1.05" stroke-linejoin="round" />
<polygon points="725.6,729.4 739.7,734.7 737.3,722.9 728.8,719.7" fill="#4385b3" stroke="#050f18" stroke-width="1.05" stroke-linejoin="round" />
<polygon points="728.8,719.7 737.3,722.9 743.5,717.0 735.0,713.8" fill="#70d6fd" stroke="#050f18" stroke-width="1.05" stroke-linejoin="round" />
<polygon points="750.3,725.7 764.3,731.0 758.2,722.6 749.8,719.4" fill="#3c79a6" stroke="#050f18" stroke-width="1.05" stroke-linejoin="round" />
<polygon points="740.4,735.0 750.3,725.7 749.8,719.4 743.6,725.3" fill="#3c79a6" stroke="#050f18" stroke-width="1.05" stroke-linejoin="round" />
<polygon points="754.5,740.3 764.3,731.0 758.2,722.6 752.0,728.5" fill="#2f6189" stroke="#050f18" stroke-width="1.05" stroke-linejoin="round" />
<polygon points="740.4,735.0 754.5,740.3 752.0,728.5 743.6,725.3" fill="#4385b3" stroke="#050f18" stroke-width="1.05" stroke-linejoin="round" />
<polygon points="743.6,725.3 752.0,728.5 758.2,722.6 749.8,719.4" fill="#70d6fd" stroke="#050f18" stroke-width="1.05" stroke-linejoin="round" />
<polygon points="765.1,731.3 779.1,736.6 773.0,728.2 764.6,725.0" fill="#3c79a6" stroke="#050f18" stroke-width="1.05" stroke-linejoin="round" />
<polygon points="755.2,740.6 765.1,731.3 764.6,725.0 758.4,730.9" fill="#3c79a6" stroke="#050f18" stroke-width="1.05" stroke-linejoin="round" />
<polygon points="769.3,745.9 779.1,736.6 773.0,728.2 766.8,734.1" fill="#2f6189" stroke="#050f18" stroke-width="1.05" stroke-linejoin="round" />
<polygon points="755.2,740.6 769.3,745.9 766.8,734.1 758.4,730.9" fill="#4385b3" stroke="#050f18" stroke-width="1.05" stroke-linejoin="round" />
<polygon points="758.4,730.9 766.8,734.1 773.0,728.2 764.6,725.0" fill="#70d6fd" stroke="#050f18" stroke-width="1.05" stroke-linejoin="round" />
<polygon points="779.8,736.9 793.9,742.2 787.8,733.9 779.4,730.7" fill="#3c79a6" stroke="#050f18" stroke-width="1.05" stroke-linejoin="round" />
<polygon points="770.0,746.2 779.8,736.9 779.4,730.7 773.2,736.5" fill="#3c79a6" stroke="#050f18" stroke-width="1.05" stroke-linejoin="round" />
<polygon points="784.0,751.6 793.9,742.2 787.8,733.9 781.6,739.7" fill="#2f6189" stroke="#050f18" stroke-width="1.05" stroke-linejoin="round" />
<polygon points="770.0,746.2 784.0,751.6 781.6,739.7 773.2,736.5" fill="#4385b3" stroke="#050f18" stroke-width="1.05" stroke-linejoin="round" />
<polygon points="773.2,736.5 781.6,739.7 787.8,733.9 779.4,730.7" fill="#70d6fd" stroke="#050f18" stroke-width="1.05" stroke-linejoin="round" />
<polygon points="794.6,742.5 808.7,747.8 802.6,739.5 794.2,736.3" fill="#3c79a6" stroke="#050f18" stroke-width="1.05" stroke-linejoin="round" />
<polygon points="784.8,751.8 794.6,742.5 794.2,736.3 788.0,742.1" fill="#3c79a6" stroke="#050f18" stroke-width="1.05" stroke-linejoin="round" />
<polygon points="798.8,757.2 808.7,747.8 802.6,739.5 796.4,745.3" fill="#2f6189" stroke="#050f18" stroke-width="1.05" stroke-linejoin="round" />
<polygon points="784.8,751.8 798.8,757.2 796.4,745.3 788.0,742.1" fill="#4385b3" stroke="#050f18" stroke-width="1.05" stroke-linejoin="round" />
<polygon points="788.0,742.1 796.4,745.3 802.6,739.5 794.2,736.3" fill="#70d6fd" stroke="#050f18" stroke-width="1.05" stroke-linejoin="round" />
<polygon points="809.4,748.1 823.5,753.5 817.4,745.1 809.0,741.9" fill="#3c79a6" stroke="#050f18" stroke-width="1.05" stroke-linejoin="round" />
<polygon points="799.5,757.4 809.4,748.1 809.0,741.9 802.8,747.7" fill="#3c79a6" stroke="#050f18" stroke-width="1.05" stroke-linejoin="round" />
<polygon points="813.6,762.8 823.5,753.5 817.4,745.1 811.2,750.9" fill="#2f6189" stroke="#050f18" stroke-width="1.05" stroke-linejoin="round" />
<polygon points="799.5,757.4 813.6,762.8 811.2,750.9 802.8,747.7" fill="#4385b3" stroke="#050f18" stroke-width="1.05" stroke-linejoin="round" />
<polygon points="802.8,747.7 811.2,750.9 817.4,745.1 809.0,741.9" fill="#70d6fd" stroke="#050f18" stroke-width="1.05" stroke-linejoin="round" />
<polygon points="824.2,753.7 838.2,759.1 832.2,750.7 823.7,747.5" fill="#3c79a6" stroke="#050f18" stroke-width="1.05" stroke-linejoin="round" />
<polygon points="814.3,763.1 824.2,753.7 823.7,747.5 817.5,753.4" fill="#3c79a6" stroke="#050f18" stroke-width="1.05" stroke-linejoin="round" />
<polygon points="828.4,768.4 838.2,759.1 832.2,750.7 826.0,756.6" fill="#2f6189" stroke="#050f18" stroke-width="1.05" stroke-linejoin="round" />
<polygon points="814.3,763.1 828.4,768.4 826.0,756.6 817.5,753.4" fill="#4385b3" stroke="#050f18" stroke-width="1.05" stroke-linejoin="round" />
<polygon points="817.5,753.4 826.0,756.6 832.2,750.7 823.7,747.5" fill="#70d6fd" stroke="#050f18" stroke-width="1.05" stroke-linejoin="round" />
<polygon points="839.0,759.4 853.0,764.7 846.9,756.3 838.5,753.1" fill="#3c79a6" stroke="#050f18" stroke-width="1.05" stroke-linejoin="round" />
<polygon points="829.1,768.7 839.0,759.4 838.5,753.1 832.3,759.0" fill="#3c79a6" stroke="#050f18" stroke-width="1.05" stroke-linejoin="round" />
<polygon points="843.2,774.0 853.0,764.7 846.9,756.3 840.7,762.2" fill="#2f6189" stroke="#050f18" stroke-width="1.05" stroke-linejoin="round" />
<polygon points="829.1,768.7 843.2,774.0 840.7,762.2 832.3,759.0" fill="#4385b3" stroke="#050f18" stroke-width="1.05" stroke-linejoin="round" />
<polygon points="832.3,759.0 840.7,762.2 846.9,756.3 838.5,753.1" fill="#70d6fd" stroke="#050f18" stroke-width="1.05" stroke-linejoin="round" />
<polygon points="832.6,790.7 843.1,780.8 842.5,774.5 832.0,784.4" fill="#2a5577" stroke="#050f18" stroke-width="0.95" stroke-linejoin="round" />
<polygon points="615.3,708.2 832.6,790.7 832.0,784.4 614.7,701.9" fill="#3b7299" stroke="#050f18" stroke-width="0.95" stroke-linejoin="round" />
<polygon points="614.7,701.9 832.0,784.4 842.5,774.5 625.2,692.0" fill="#3f7dab" stroke="#050f18" stroke-width="0.95" stroke-linejoin="round" />
<polygon points="625.2,692.4 639.3,697.7 633.2,689.3 624.8,686.1" fill="#3c79a6" stroke="#050f18" stroke-width="1.05" stroke-linejoin="round" />
<polygon points="615.4,701.7 625.2,692.4 624.8,686.1 618.6,692.0" fill="#3c79a6" stroke="#050f18" stroke-width="1.05" stroke-linejoin="round" />
<polygon points="629.4,707.0 639.3,697.7 633.2,689.3 627.0,695.2" fill="#2f6189" stroke="#050f18" stroke-width="1.05" stroke-linejoin="round" />
<polygon points="615.4,701.7 629.4,707.0 627.0,695.2 618.6,692.0" fill="#4385b3" stroke="#050f18" stroke-width="1.05" stroke-linejoin="round" />
<polygon points="618.6,692.0 627.0,695.2 633.2,689.3 624.8,686.1" fill="#70d6fd" stroke="#050f18" stroke-width="1.05" stroke-linejoin="round" />
<polygon points="640.0,698.0 654.1,703.3 648.0,695.0 639.6,691.8" fill="#3c79a6" stroke="#050f18" stroke-width="1.05" stroke-linejoin="round" />
<polygon points="630.2,707.3 640.0,698.0 639.6,691.8 633.4,697.6" fill="#3c79a6" stroke="#050f18" stroke-width="1.05" stroke-linejoin="round" />
<polygon points="644.2,712.7 654.1,703.3 648.0,695.0 641.8,700.8" fill="#2f6189" stroke="#050f18" stroke-width="1.05" stroke-linejoin="round" />
<polygon points="630.2,707.3 644.2,712.7 641.8,700.8 633.4,697.6" fill="#4385b3" stroke="#050f18" stroke-width="1.05" stroke-linejoin="round" />
<polygon points="633.4,697.6 641.8,700.8 648.0,695.0 639.6,691.8" fill="#70d6fd" stroke="#050f18" stroke-width="1.05" stroke-linejoin="round" />
<polygon points="654.8,703.6 668.9,709.0 662.8,700.6 654.4,697.4" fill="#3c79a6" stroke="#050f18" stroke-width="1.05" stroke-linejoin="round" />
<polygon points="644.9,712.9 654.8,703.6 654.4,697.4 648.2,703.2" fill="#3c79a6" stroke="#050f18" stroke-width="1.05" stroke-linejoin="round" />
<polygon points="659.0,718.3 668.9,709.0 662.8,700.6 656.6,706.4" fill="#2f6189" stroke="#050f18" stroke-width="1.05" stroke-linejoin="round" />
<polygon points="644.9,712.9 659.0,718.3 656.6,706.4 648.2,703.2" fill="#4385b3" stroke="#050f18" stroke-width="1.05" stroke-linejoin="round" />
<polygon points="648.2,703.2 656.6,706.4 662.8,700.6 654.4,697.4" fill="#70d6fd" stroke="#050f18" stroke-width="1.05" stroke-linejoin="round" />
<polygon points="669.6,709.2 683.6,714.6 677.6,706.2 669.1,703.0" fill="#3c79a6" stroke="#050f18" stroke-width="1.05" stroke-linejoin="round" />
<polygon points="659.7,718.6 669.6,709.2 669.1,703.0 662.9,708.9" fill="#3c79a6" stroke="#050f18" stroke-width="1.05" stroke-linejoin="round" />
<polygon points="673.8,723.9 683.6,714.6 677.6,706.2 671.4,712.1" fill="#2f6189" stroke="#050f18" stroke-width="1.05" stroke-linejoin="round" />
<polygon points="659.7,718.6 673.8,723.9 671.4,712.1 662.9,708.9" fill="#4385b3" stroke="#050f18" stroke-width="1.05" stroke-linejoin="round" />
<polygon points="662.9,708.9 671.4,712.1 677.6,706.2 669.1,703.0" fill="#70d6fd" stroke="#050f18" stroke-width="1.05" stroke-linejoin="round" />
<polygon points="684.4,714.9 698.4,720.2 692.3,711.8 683.9,708.6" fill="#3c79a6" stroke="#050f18" stroke-width="1.05" stroke-linejoin="round" />
<polygon points="674.5,724.2 684.4,714.9 683.9,708.6 677.7,714.5" fill="#3c79a6" stroke="#050f18" stroke-width="1.05" stroke-linejoin="round" />
<polygon points="688.6,729.5 698.4,720.2 692.3,711.8 686.1,717.7" fill="#2f6189" stroke="#050f18" stroke-width="1.05" stroke-linejoin="round" />
<polygon points="674.5,724.2 688.6,729.5 686.1,717.7 677.7,714.5" fill="#4385b3" stroke="#050f18" stroke-width="1.05" stroke-linejoin="round" />
<polygon points="677.7,714.5 686.1,717.7 692.3,711.8 683.9,708.6" fill="#70d6fd" stroke="#050f18" stroke-width="1.05" stroke-linejoin="round" />
<polygon points="699.1,720.5 713.2,725.8 707.1,717.4 698.7,714.2" fill="#3c79a6" stroke="#050f18" stroke-width="1.05" stroke-linejoin="round" />
<polygon points="689.3,729.8 699.1,720.5 698.7,714.2 692.5,720.1" fill="#3c79a6" stroke="#050f18" stroke-width="1.05" stroke-linejoin="round" />
<polygon points="703.3,735.1 713.2,725.8 707.1,717.4 700.9,723.3" fill="#2f6189" stroke="#050f18" stroke-width="1.05" stroke-linejoin="round" />
<polygon points="689.3,729.8 703.3,735.1 700.9,723.3 692.5,720.1" fill="#4385b3" stroke="#050f18" stroke-width="1.05" stroke-linejoin="round" />
<polygon points="692.5,720.1 700.9,723.3 707.1,717.4 698.7,714.2" fill="#70d6fd" stroke="#050f18" stroke-width="1.05" stroke-linejoin="round" />
<polygon points="713.9,726.1 728.0,731.4 721.9,723.0 713.5,719.8" fill="#3c79a6" stroke="#050f18" stroke-width="1.05" stroke-linejoin="round" />
<polygon points="704.1,735.4 713.9,726.1 713.5,719.8 707.3,725.7" fill="#3c79a6" stroke="#050f18" stroke-width="1.05" stroke-linejoin="round" />
<polygon points="718.1,740.7 728.0,731.4 721.9,723.0 715.7,728.9" fill="#2f6189" stroke="#050f18" stroke-width="1.05" stroke-linejoin="round" />
<polygon points="704.1,735.4 718.1,740.7 715.7,728.9 707.3,725.7" fill="#4385b3" stroke="#050f18" stroke-width="1.05" stroke-linejoin="round" />
<polygon points="707.3,725.7 715.7,728.9 721.9,723.0 713.5,719.8" fill="#70d6fd" stroke="#050f18" stroke-width="1.05" stroke-linejoin="round" />
<polygon points="728.7,731.7 742.8,737.0 736.7,728.7 728.3,725.5" fill="#3c79a6" stroke="#050f18" stroke-width="1.05" stroke-linejoin="round" />
<polygon points="718.9,741.0 728.7,731.7 728.3,725.5 722.1,731.3" fill="#3c79a6" stroke="#050f18" stroke-width="1.05" stroke-linejoin="round" />
<polygon points="732.9,746.4 742.8,737.0 736.7,728.7 730.5,734.5" fill="#2f6189" stroke="#050f18" stroke-width="1.05" stroke-linejoin="round" />
<polygon points="718.9,741.0 732.9,746.4 730.5,734.5 722.1,731.3" fill="#4385b3" stroke="#050f18" stroke-width="1.05" stroke-linejoin="round" />
<polygon points="722.1,731.3 730.5,734.5 736.7,728.7 728.3,725.5" fill="#70d6fd" stroke="#050f18" stroke-width="1.05" stroke-linejoin="round" />
<polygon points="743.5,737.3 757.5,742.7 751.5,734.3 743.0,731.1" fill="#3c79a6" stroke="#050f18" stroke-width="1.05" stroke-linejoin="round" />
<polygon points="733.6,746.6 743.5,737.3 743.0,731.1 736.8,736.9" fill="#3c79a6" stroke="#050f18" stroke-width="1.05" stroke-linejoin="round" />
<polygon points="747.7,752.0 757.5,742.7 751.5,734.3 745.3,740.1" fill="#2f6189" stroke="#050f18" stroke-width="1.05" stroke-linejoin="round" />
<polygon points="733.6,746.6 747.7,752.0 745.3,740.1 736.8,736.9" fill="#4385b3" stroke="#050f18" stroke-width="1.05" stroke-linejoin="round" />
<polygon points="736.8,736.9 745.3,740.1 751.5,734.3 743.0,731.1" fill="#70d6fd" stroke="#050f18" stroke-width="1.05" stroke-linejoin="round" />
<polygon points="758.3,742.9 772.3,748.3 766.2,739.9 757.8,736.7" fill="#3c79a6" stroke="#050f18" stroke-width="1.05" stroke-linejoin="round" />
<polygon points="748.4,752.3 758.3,742.9 757.8,736.7 751.6,742.6" fill="#3c79a6" stroke="#050f18" stroke-width="1.05" stroke-linejoin="round" />
<polygon points="762.5,757.6 772.3,748.3 766.2,739.9 760.0,745.8" fill="#2f6189" stroke="#050f18" stroke-width="1.05" stroke-linejoin="round" />
<polygon points="748.4,752.3 762.5,757.6 760.0,745.8 751.6,742.6" fill="#4385b3" stroke="#050f18" stroke-width="1.05" stroke-linejoin="round" />
<polygon points="751.6,742.6 760.0,745.8 766.2,739.9 757.8,736.7" fill="#70d6fd" stroke="#050f18" stroke-width="1.05" stroke-linejoin="round" />
<polygon points="773.1,748.6 787.1,753.9 781.0,745.5 772.6,742.3" fill="#3c79a6" stroke="#050f18" stroke-width="1.05" stroke-linejoin="round" />
<polygon points="763.2,757.9 773.1,748.6 772.6,742.3 766.4,748.2" fill="#3c79a6" stroke="#050f18" stroke-width="1.05" stroke-linejoin="round" />
<polygon points="777.3,763.2 787.1,753.9 781.0,745.5 774.8,751.4" fill="#2f6189" stroke="#050f18" stroke-width="1.05" stroke-linejoin="round" />
<polygon points="763.2,757.9 777.3,763.2 774.8,751.4 766.4,748.2" fill="#4385b3" stroke="#050f18" stroke-width="1.05" stroke-linejoin="round" />
<polygon points="766.4,748.2 774.8,751.4 781.0,745.5 772.6,742.3" fill="#70d6fd" stroke="#050f18" stroke-width="1.05" stroke-linejoin="round" />
<polygon points="787.8,754.2 801.9,759.5 795.8,751.1 787.4,747.9" fill="#3c79a6" stroke="#050f18" stroke-width="1.05" stroke-linejoin="round" />
<polygon points="778.0,763.5 787.8,754.2 787.4,747.9 781.2,753.8" fill="#3c79a6" stroke="#050f18" stroke-width="1.05" stroke-linejoin="round" />
<polygon points="792.0,768.8 801.9,759.5 795.8,751.1 789.6,757.0" fill="#2f6189" stroke="#050f18" stroke-width="1.05" stroke-linejoin="round" />
<polygon points="778.0,763.5 792.0,768.8 789.6,757.0 781.2,753.8" fill="#4385b3" stroke="#050f18" stroke-width="1.05" stroke-linejoin="round" />
<polygon points="781.2,753.8 789.6,757.0 795.8,751.1 787.4,747.9" fill="#70d6fd" stroke="#050f18" stroke-width="1.05" stroke-linejoin="round" />
<polygon points="802.6,759.8 816.7,765.1 810.6,756.7 802.2,753.5" fill="#3c79a6" stroke="#050f18" stroke-width="1.05" stroke-linejoin="round" />
<polygon points="792.8,769.1 802.6,759.8 802.2,753.5 796.0,759.4" fill="#3c79a6" stroke="#050f18" stroke-width="1.05" stroke-linejoin="round" />
<polygon points="806.8,774.5 816.7,765.1 810.6,756.7 804.4,762.6" fill="#2f6189" stroke="#050f18" stroke-width="1.05" stroke-linejoin="round" />
<polygon points="792.8,769.1 806.8,774.5 804.4,762.6 796.0,759.4" fill="#4385b3" stroke="#050f18" stroke-width="1.05" stroke-linejoin="round" />
<polygon points="796.0,759.4 804.4,762.6 810.6,756.7 802.2,753.5" fill="#70d6fd" stroke="#050f18" stroke-width="1.05" stroke-linejoin="round" />
<polygon points="817.4,765.4 841.8,774.7 835.7,766.3 817.0,759.2" fill="#3c79a6" stroke="#050f18" stroke-width="1.05" stroke-linejoin="round" />
<polygon points="807.5,774.7 817.4,765.4 817.0,759.2 810.8,765.0" fill="#3c79a6" stroke="#050f18" stroke-width="1.05" stroke-linejoin="round" />
<polygon points="831.9,784.0 841.8,774.7 835.7,766.3 829.5,772.2" fill="#2f6189" stroke="#050f18" stroke-width="1.05" stroke-linejoin="round" />
<polygon points="807.5,774.7 831.9,784.0 829.5,772.2 810.8,765.0" fill="#4385b3" stroke="#050f18" stroke-width="1.05" stroke-linejoin="round" />
<polygon points="810.8,765.0 829.5,772.2 835.7,766.3 817.0,759.2" fill="#70d6fd" stroke="#050f18" stroke-width="1.05" stroke-linejoin="round" />
<polygon points="813.8,797.4 824.2,787.5 823.6,781.6 813.2,791.5" fill="#2a5577" stroke="#050f18" stroke-width="0.95" stroke-linejoin="round" />
<polygon points="599.4,716.0 813.8,797.4 813.2,791.5 598.8,710.1" fill="#3b7299" stroke="#050f18" stroke-width="0.95" stroke-linejoin="round" />
<polygon points="598.8,710.1 813.2,791.5 823.6,781.6 609.3,700.2" fill="#3f7dab" stroke="#050f18" stroke-width="0.95" stroke-linejoin="round" />
<polygon points="609.4,700.6 632.3,709.3 626.2,700.9 608.9,694.4" fill="#3c79a6" stroke="#050f18" stroke-width="1.05" stroke-linejoin="round" />
<polygon points="599.5,709.9 609.4,700.6 608.9,694.4 602.7,700.2" fill="#3c79a6" stroke="#050f18" stroke-width="1.05" stroke-linejoin="round" />
<polygon points="622.4,718.6 632.3,709.3 626.2,700.9 620.0,706.8" fill="#2f6189" stroke="#050f18" stroke-width="1.05" stroke-linejoin="round" />
<polygon points="599.5,709.9 622.4,718.6 620.0,706.8 602.7,700.2" fill="#4385b3" stroke="#050f18" stroke-width="1.05" stroke-linejoin="round" />
<polygon points="602.7,700.2 620.0,706.8 626.2,700.9 608.9,694.4" fill="#70d6fd" stroke="#050f18" stroke-width="1.05" stroke-linejoin="round" />
<polygon points="633.0,709.6 647.1,714.9 641.0,706.5 632.6,703.3" fill="#3c79a6" stroke="#050f18" stroke-width="1.05" stroke-linejoin="round" />
<polygon points="623.2,718.9 633.0,709.6 632.6,703.3 626.4,709.2" fill="#3c79a6" stroke="#050f18" stroke-width="1.05" stroke-linejoin="round" />
<polygon points="637.2,724.2 647.1,714.9 641.0,706.5 634.8,712.4" fill="#2f6189" stroke="#050f18" stroke-width="1.05" stroke-linejoin="round" />
<polygon points="623.2,718.9 637.2,724.2 634.8,712.4 626.4,709.2" fill="#4385b3" stroke="#050f18" stroke-width="1.05" stroke-linejoin="round" />
<polygon points="626.4,709.2 634.8,712.4 641.0,706.5 632.6,703.3" fill="#70d6fd" stroke="#050f18" stroke-width="1.05" stroke-linejoin="round" />
<polygon points="647.8,715.2 661.9,720.5 655.8,712.2 647.4,709.0" fill="#3c79a6" stroke="#050f18" stroke-width="1.05" stroke-linejoin="round" />
<polygon points="637.9,724.5 647.8,715.2 647.4,709.0 641.2,714.8" fill="#3c79a6" stroke="#050f18" stroke-width="1.05" stroke-linejoin="round" />
<polygon points="652.0,729.9 661.9,720.5 655.8,712.2 649.6,718.0" fill="#2f6189" stroke="#050f18" stroke-width="1.05" stroke-linejoin="round" />
<polygon points="637.9,724.5 652.0,729.9 649.6,718.0 641.2,714.8" fill="#4385b3" stroke="#050f18" stroke-width="1.05" stroke-linejoin="round" />
<polygon points="641.2,714.8 649.6,718.0 655.8,712.2 647.4,709.0" fill="#70d6fd" stroke="#050f18" stroke-width="1.05" stroke-linejoin="round" />
<polygon points="662.6,720.8 676.6,726.2 670.6,717.8 662.1,714.6" fill="#3c79a6" stroke="#050f18" stroke-width="1.05" stroke-linejoin="round" />
<polygon points="652.7,730.1 662.6,720.8 662.1,714.6 655.9,720.4" fill="#3c79a6" stroke="#050f18" stroke-width="1.05" stroke-linejoin="round" />
<polygon points="666.8,735.5 676.6,726.2 670.6,717.8 664.4,723.6" fill="#2f6189" stroke="#050f18" stroke-width="1.05" stroke-linejoin="round" />
<polygon points="652.7,730.1 666.8,735.5 664.4,723.6 655.9,720.4" fill="#4385b3" stroke="#050f18" stroke-width="1.05" stroke-linejoin="round" />
<polygon points="655.9,720.4 664.4,723.6 670.6,717.8 662.1,714.6" fill="#70d6fd" stroke="#050f18" stroke-width="1.05" stroke-linejoin="round" />
<polygon points="677.4,726.4 691.4,731.8 685.3,723.4 676.9,720.2" fill="#3c79a6" stroke="#050f18" stroke-width="1.05" stroke-linejoin="round" />
<polygon points="667.5,735.8 677.4,726.4 676.9,720.2 670.7,726.1" fill="#3c79a6" stroke="#050f18" stroke-width="1.05" stroke-linejoin="round" />
<polygon points="681.6,741.1 691.4,731.8 685.3,723.4 679.1,729.3" fill="#2f6189" stroke="#050f18" stroke-width="1.05" stroke-linejoin="round" />
<polygon points="667.5,735.8 681.6,741.1 679.1,729.3 670.7,726.1" fill="#4385b3" stroke="#050f18" stroke-width="1.05" stroke-linejoin="round" />
<polygon points="670.7,726.1 679.1,729.3 685.3,723.4 676.9,720.2" fill="#70d6fd" stroke="#050f18" stroke-width="1.05" stroke-linejoin="round" />
<polygon points="692.1,732.1 706.2,737.4 700.1,729.0 691.7,725.8" fill="#3c79a6" stroke="#050f18" stroke-width="1.05" stroke-linejoin="round" />
<polygon points="682.3,741.4 692.1,732.1 691.7,725.8 685.5,731.7" fill="#3c79a6" stroke="#050f18" stroke-width="1.05" stroke-linejoin="round" />
<polygon points="696.3,746.7 706.2,737.4 700.1,729.0 693.9,734.9" fill="#2f6189" stroke="#050f18" stroke-width="1.05" stroke-linejoin="round" />
<polygon points="682.3,741.4 696.3,746.7 693.9,734.9 685.5,731.7" fill="#4385b3" stroke="#050f18" stroke-width="1.05" stroke-linejoin="round" />
<polygon points="685.5,731.7 693.9,734.9 700.1,729.0 691.7,725.8" fill="#70d6fd" stroke="#050f18" stroke-width="1.05" stroke-linejoin="round" />
<polygon points="706.9,737.7 721.0,743.0 714.9,734.6 706.5,731.4" fill="#3c79a6" stroke="#050f18" stroke-width="1.05" stroke-linejoin="round" />
<polygon points="697.1,747.0 706.9,737.7 706.5,731.4 700.3,737.3" fill="#3c79a6" stroke="#050f18" stroke-width="1.05" stroke-linejoin="round" />
<polygon points="711.1,752.3 721.0,743.0 714.9,734.6 708.7,740.5" fill="#2f6189" stroke="#050f18" stroke-width="1.05" stroke-linejoin="round" />
<polygon points="697.1,747.0 711.1,752.3 708.7,740.5 700.3,737.3" fill="#4385b3" stroke="#050f18" stroke-width="1.05" stroke-linejoin="round" />
<polygon points="700.3,737.3 708.7,740.5 714.9,734.6 706.5,731.4" fill="#70d6fd" stroke="#050f18" stroke-width="1.05" stroke-linejoin="round" />
<polygon points="721.7,743.3 735.8,748.6 729.7,740.2 721.3,737.0" fill="#3c79a6" stroke="#050f18" stroke-width="1.05" stroke-linejoin="round" />
<polygon points="711.9,752.6 721.7,743.3 721.3,737.0 715.1,742.9" fill="#3c79a6" stroke="#050f18" stroke-width="1.05" stroke-linejoin="round" />
<polygon points="725.9,757.9 735.8,748.6 729.7,740.2 723.5,746.1" fill="#2f6189" stroke="#050f18" stroke-width="1.05" stroke-linejoin="round" />
<polygon points="711.9,752.6 725.9,757.9 723.5,746.1 715.1,742.9" fill="#4385b3" stroke="#050f18" stroke-width="1.05" stroke-linejoin="round" />
<polygon points="715.1,742.9 723.5,746.1 729.7,740.2 721.3,737.0" fill="#70d6fd" stroke="#050f18" stroke-width="1.05" stroke-linejoin="round" />
<polygon points="736.5,748.9 750.5,754.2 744.5,745.9 736.0,742.7" fill="#3c79a6" stroke="#050f18" stroke-width="1.05" stroke-linejoin="round" />
<polygon points="726.6,758.2 736.5,748.9 736.0,742.7 729.8,748.5" fill="#3c79a6" stroke="#050f18" stroke-width="1.05" stroke-linejoin="round" />
<polygon points="740.7,763.6 750.5,754.2 744.5,745.9 738.3,751.7" fill="#2f6189" stroke="#050f18" stroke-width="1.05" stroke-linejoin="round" />
<polygon points="726.6,758.2 740.7,763.6 738.3,751.7 729.8,748.5" fill="#4385b3" stroke="#050f18" stroke-width="1.05" stroke-linejoin="round" />
<polygon points="729.8,748.5 738.3,751.7 744.5,745.9 736.0,742.7" fill="#70d6fd" stroke="#050f18" stroke-width="1.05" stroke-linejoin="round" />
<polygon points="751.3,754.5 765.3,759.9 759.2,751.5 750.8,748.3" fill="#3c79a6" stroke="#050f18" stroke-width="1.05" stroke-linejoin="round" />
<polygon points="741.4,763.8 751.3,754.5 750.8,748.3 744.6,754.1" fill="#3c79a6" stroke="#050f18" stroke-width="1.05" stroke-linejoin="round" />
<polygon points="755.5,769.2 765.3,759.9 759.2,751.5 753.0,757.3" fill="#2f6189" stroke="#050f18" stroke-width="1.05" stroke-linejoin="round" />
<polygon points="741.4,763.8 755.5,769.2 753.0,757.3 744.6,754.1" fill="#4385b3" stroke="#050f18" stroke-width="1.05" stroke-linejoin="round" />
<polygon points="744.6,754.1 753.0,757.3 759.2,751.5 750.8,748.3" fill="#70d6fd" stroke="#050f18" stroke-width="1.05" stroke-linejoin="round" />
<polygon points="766.1,760.1 780.1,765.5 774.0,757.1 765.6,753.9" fill="#3c79a6" stroke="#050f18" stroke-width="1.05" stroke-linejoin="round" />
<polygon points="756.2,769.5 766.1,760.1 765.6,753.9 759.4,759.8" fill="#3c79a6" stroke="#050f18" stroke-width="1.05" stroke-linejoin="round" />
<polygon points="770.2,774.8 780.1,765.5 774.0,757.1 767.8,763.0" fill="#2f6189" stroke="#050f18" stroke-width="1.05" stroke-linejoin="round" />
<polygon points="756.2,769.5 770.2,774.8 767.8,763.0 759.4,759.8" fill="#4385b3" stroke="#050f18" stroke-width="1.05" stroke-linejoin="round" />
<polygon points="759.4,759.8 767.8,763.0 774.0,757.1 765.6,753.9" fill="#70d6fd" stroke="#050f18" stroke-width="1.05" stroke-linejoin="round" />
<polygon points="780.8,765.8 794.9,771.1 788.8,762.7 780.4,759.5" fill="#3c79a6" stroke="#050f18" stroke-width="1.05" stroke-linejoin="round" />
<polygon points="771.0,775.1 780.8,765.8 780.4,759.5 774.2,765.4" fill="#3c79a6" stroke="#050f18" stroke-width="1.05" stroke-linejoin="round" />
<polygon points="785.0,780.4 794.9,771.1 788.8,762.7 782.6,768.6" fill="#2f6189" stroke="#050f18" stroke-width="1.05" stroke-linejoin="round" />
<polygon points="771.0,775.1 785.0,780.4 782.6,768.6 774.2,765.4" fill="#4385b3" stroke="#050f18" stroke-width="1.05" stroke-linejoin="round" />
<polygon points="774.2,765.4 782.6,768.6 788.8,762.7 780.4,759.5" fill="#70d6fd" stroke="#050f18" stroke-width="1.05" stroke-linejoin="round" />
<polygon points="795.6,771.4 823.0,781.8 816.9,773.4 795.2,765.1" fill="#3c79a6" stroke="#050f18" stroke-width="1.05" stroke-linejoin="round" />
<polygon points="785.8,780.7 795.6,771.4 795.2,765.1 789.0,771.0" fill="#3c79a6" stroke="#050f18" stroke-width="1.05" stroke-linejoin="round" />
<polygon points="813.1,791.1 823.0,781.8 816.9,773.4 810.7,779.2" fill="#2f6189" stroke="#050f18" stroke-width="1.05" stroke-linejoin="round" />
<polygon points="785.8,780.7 813.1,791.1 810.7,779.2 789.0,771.0" fill="#4385b3" stroke="#050f18" stroke-width="1.05" stroke-linejoin="round" />
<polygon points="789.0,771.0 810.7,779.2 816.9,773.4 795.2,765.1" fill="#70d6fd" stroke="#050f18" stroke-width="1.05" stroke-linejoin="round" />
<polygon points="765.0,792.7 775.4,782.8 774.9,777.3 764.4,787.2" fill="#2a5577" stroke="#050f18" stroke-width="0.95" stroke-linejoin="round" />
<polygon points="629.0,741.0 765.0,792.7 764.4,787.2 628.4,735.5" fill="#3b7299" stroke="#050f18" stroke-width="0.95" stroke-linejoin="round" />
<polygon points="628.4,735.5 764.4,787.2 774.9,777.3 638.9,725.7" fill="#3f7dab" stroke="#050f18" stroke-width="0.95" stroke-linejoin="round" />
<polygon points="638.9,726.1 653.0,731.4 646.9,723.0 638.5,719.8" fill="#3c79a6" stroke="#050f18" stroke-width="1.05" stroke-linejoin="round" />
<polygon points="629.1,735.4 638.9,726.1 638.5,719.8 632.3,725.7" fill="#3c79a6" stroke="#050f18" stroke-width="1.05" stroke-linejoin="round" />
<polygon points="643.1,740.7 653.0,731.4 646.9,723.0 640.7,728.9" fill="#2f6189" stroke="#050f18" stroke-width="1.05" stroke-linejoin="round" />
<polygon points="629.1,735.4 643.1,740.7 640.7,728.9 632.3,725.7" fill="#4385b3" stroke="#050f18" stroke-width="1.05" stroke-linejoin="round" />
<polygon points="632.3,725.7 640.7,728.9 646.9,723.0 638.5,719.8" fill="#70d6fd" stroke="#050f18" stroke-width="1.05" stroke-linejoin="round" />
<polygon points="653.7,731.7 774.2,777.5 768.1,769.1 653.3,725.5" fill="#3c79a6" stroke="#050f18" stroke-width="1.05" stroke-linejoin="round" />
<polygon points="643.9,741.0 653.7,731.7 653.3,725.5 647.1,731.3" fill="#3c79a6" stroke="#050f18" stroke-width="1.05" stroke-linejoin="round" />
<polygon points="764.3,786.8 774.2,777.5 768.1,769.1 761.9,775.0" fill="#2f6189" stroke="#050f18" stroke-width="1.05" stroke-linejoin="round" />
<polygon points="643.9,741.0 764.3,786.8 761.9,775.0 647.1,731.3" fill="#4385b3" stroke="#050f18" stroke-width="1.05" stroke-linejoin="round" />
<polygon points="647.1,731.3 761.9,775.0 768.1,769.1 653.3,725.5" fill="#70d6fd" stroke="#050f18" stroke-width="1.05" stroke-linejoin="round" />
<polygon points="919.2,795.9 929.7,786.0 929.0,779.5 918.6,789.4" fill="#2a5577" stroke="#050f18" stroke-width="0.95" stroke-linejoin="round" />
<polygon points="860.1,773.4 919.2,795.9 918.6,789.4 859.5,766.9" fill="#3b7299" stroke="#050f18" stroke-width="0.95" stroke-linejoin="round" />
<polygon points="859.5,766.9 918.6,789.4 929.0,779.5 869.9,757.1" fill="#3f7dab" stroke="#050f18" stroke-width="0.95" stroke-linejoin="round" />
<polygon points="870.0,757.5 884.0,762.8 878.0,754.4 869.5,751.2" fill="#3c79a6" stroke="#050f18" stroke-width="1.05" stroke-linejoin="round" />
<polygon points="860.1,766.8 870.0,757.5 869.5,751.2 863.3,757.1" fill="#3c79a6" stroke="#050f18" stroke-width="1.05" stroke-linejoin="round" />
<polygon points="874.2,772.1 884.0,762.8 878.0,754.4 871.8,760.3" fill="#2f6189" stroke="#050f18" stroke-width="1.05" stroke-linejoin="round" />
<polygon points="860.1,766.8 874.2,772.1 871.8,760.3 863.3,757.1" fill="#4385b3" stroke="#050f18" stroke-width="1.05" stroke-linejoin="round" />
<polygon points="863.3,757.1 871.8,760.3 878.0,754.4 869.5,751.2" fill="#70d6fd" stroke="#050f18" stroke-width="1.05" stroke-linejoin="round" />
<polygon points="884.8,763.1 898.8,768.4 892.7,760.1 884.3,756.9" fill="#3c79a6" stroke="#050f18" stroke-width="1.05" stroke-linejoin="round" />
<polygon points="874.9,772.4 884.8,763.1 884.3,756.9 878.1,762.7" fill="#3c79a6" stroke="#050f18" stroke-width="1.05" stroke-linejoin="round" />
<polygon points="889.0,777.8 898.8,768.4 892.7,760.1 886.5,765.9" fill="#2f6189" stroke="#050f18" stroke-width="1.05" stroke-linejoin="round" />
<polygon points="874.9,772.4 889.0,777.8 886.5,765.9 878.1,762.7" fill="#4385b3" stroke="#050f18" stroke-width="1.05" stroke-linejoin="round" />
<polygon points="878.1,762.7 886.5,765.9 892.7,760.1 884.3,756.9" fill="#70d6fd" stroke="#050f18" stroke-width="1.05" stroke-linejoin="round" />
<polygon points="899.5,768.7 913.6,774.1 907.5,765.7 899.1,762.5" fill="#3c79a6" stroke="#050f18" stroke-width="1.05" stroke-linejoin="round" />
<polygon points="889.7,778.0 899.5,768.7 899.1,762.5 892.9,768.3" fill="#3c79a6" stroke="#050f18" stroke-width="1.05" stroke-linejoin="round" />
<polygon points="903.7,783.4 913.6,774.1 907.5,765.7 901.3,771.5" fill="#2f6189" stroke="#050f18" stroke-width="1.05" stroke-linejoin="round" />
<polygon points="889.7,778.0 903.7,783.4 901.3,771.5 892.9,768.3" fill="#4385b3" stroke="#050f18" stroke-width="1.05" stroke-linejoin="round" />
<polygon points="892.9,768.3 901.3,771.5 907.5,765.7 899.1,762.5" fill="#70d6fd" stroke="#050f18" stroke-width="1.05" stroke-linejoin="round" />
<polygon points="914.3,774.3 928.4,779.7 922.3,771.3 913.9,768.1" fill="#3c79a6" stroke="#050f18" stroke-width="1.05" stroke-linejoin="round" />
<polygon points="904.5,783.6 914.3,774.3 913.9,768.1 907.7,773.9" fill="#3c79a6" stroke="#050f18" stroke-width="1.05" stroke-linejoin="round" />
<polygon points="918.5,789.0 928.4,779.7 922.3,771.3 916.1,777.1" fill="#2f6189" stroke="#050f18" stroke-width="1.05" stroke-linejoin="round" />
<polygon points="904.5,783.6 918.5,789.0 916.1,777.1 907.7,773.9" fill="#4385b3" stroke="#050f18" stroke-width="1.05" stroke-linejoin="round" />
<polygon points="907.7,773.9 916.1,777.1 922.3,771.3 913.9,768.1" fill="#70d6fd" stroke="#050f18" stroke-width="1.05" stroke-linejoin="round" />
<polygon points="908.8,805.8 919.2,795.9 918.6,789.4 908.1,799.3" fill="#2a5577" stroke="#050f18" stroke-width="0.95" stroke-linejoin="round" />
<polygon points="849.7,783.3 908.8,805.8 908.1,799.3 849.0,776.8" fill="#3b7299" stroke="#050f18" stroke-width="0.95" stroke-linejoin="round" />
<polygon points="849.0,776.8 908.1,799.3 918.6,789.4 859.5,766.9" fill="#3f7dab" stroke="#050f18" stroke-width="0.95" stroke-linejoin="round" />
<polygon points="859.5,767.4 873.6,772.7 867.5,764.3 859.1,761.1" fill="#3c79a6" stroke="#050f18" stroke-width="1.05" stroke-linejoin="round" />
<polygon points="849.7,776.7 859.5,767.4 859.1,761.1 852.9,767.0" fill="#3c79a6" stroke="#050f18" stroke-width="1.05" stroke-linejoin="round" />
<polygon points="863.7,782.0 873.6,772.7 867.5,764.3 861.3,770.2" fill="#2f6189" stroke="#050f18" stroke-width="1.05" stroke-linejoin="round" />
<polygon points="849.7,776.7 863.7,782.0 861.3,770.2 852.9,767.0" fill="#4385b3" stroke="#050f18" stroke-width="1.05" stroke-linejoin="round" />
<polygon points="852.9,767.0 861.3,770.2 867.5,764.3 859.1,761.1" fill="#70d6fd" stroke="#050f18" stroke-width="1.05" stroke-linejoin="round" />
<polygon points="874.3,773.0 888.4,778.3 882.3,769.9 873.9,766.7" fill="#3c79a6" stroke="#050f18" stroke-width="1.05" stroke-linejoin="round" />
<polygon points="864.4,782.3 874.3,773.0 873.9,766.7 867.7,772.6" fill="#3c79a6" stroke="#050f18" stroke-width="1.05" stroke-linejoin="round" />
<polygon points="878.5,787.6 888.4,778.3 882.3,769.9 876.1,775.8" fill="#2f6189" stroke="#050f18" stroke-width="1.05" stroke-linejoin="round" />
<polygon points="864.4,782.3 878.5,787.6 876.1,775.8 867.7,772.6" fill="#4385b3" stroke="#050f18" stroke-width="1.05" stroke-linejoin="round" />
<polygon points="867.7,772.6 876.1,775.8 882.3,769.9 873.9,766.7" fill="#70d6fd" stroke="#050f18" stroke-width="1.05" stroke-linejoin="round" />
<polygon points="889.1,778.6 903.1,783.9 897.1,775.6 888.6,772.4" fill="#3c79a6" stroke="#050f18" stroke-width="1.05" stroke-linejoin="round" />
<polygon points="879.2,787.9 889.1,778.6 888.6,772.4 882.4,778.2" fill="#3c79a6" stroke="#050f18" stroke-width="1.05" stroke-linejoin="round" />
<polygon points="893.3,793.3 903.1,783.9 897.1,775.6 890.9,781.4" fill="#2f6189" stroke="#050f18" stroke-width="1.05" stroke-linejoin="round" />
<polygon points="879.2,787.9 893.3,793.3 890.9,781.4 882.4,778.2" fill="#4385b3" stroke="#050f18" stroke-width="1.05" stroke-linejoin="round" />
<polygon points="882.4,778.2 890.9,781.4 897.1,775.6 888.6,772.4" fill="#70d6fd" stroke="#050f18" stroke-width="1.05" stroke-linejoin="round" />
<polygon points="903.9,784.2 917.9,789.6 911.8,781.2 903.4,778.0" fill="#3c79a6" stroke="#050f18" stroke-width="1.05" stroke-linejoin="round" />
<polygon points="894.0,793.5 903.9,784.2 903.4,778.0 897.2,783.8" fill="#3c79a6" stroke="#050f18" stroke-width="1.05" stroke-linejoin="round" />
<polygon points="908.1,798.9 917.9,789.6 911.8,781.2 905.6,787.0" fill="#2f6189" stroke="#050f18" stroke-width="1.05" stroke-linejoin="round" />
<polygon points="894.0,793.5 908.1,798.9 905.6,787.0 897.2,783.8" fill="#4385b3" stroke="#050f18" stroke-width="1.05" stroke-linejoin="round" />
<polygon points="897.2,783.8 905.6,787.0 911.8,781.2 903.4,778.0" fill="#70d6fd" stroke="#050f18" stroke-width="1.05" stroke-linejoin="round" />
<polygon points="898.3,815.7 908.8,805.8 908.1,799.3 897.7,809.2" fill="#2a5577" stroke="#050f18" stroke-width="0.95" stroke-linejoin="round" />
<polygon points="839.2,793.2 898.3,815.7 897.7,809.2 838.5,786.7" fill="#3b7299" stroke="#050f18" stroke-width="0.95" stroke-linejoin="round" />
<polygon points="838.5,786.7 897.7,809.2 908.1,799.3 849.0,776.8" fill="#3f7dab" stroke="#050f18" stroke-width="0.95" stroke-linejoin="round" />
<polygon points="849.1,777.2 863.1,782.6 857.0,774.2 848.6,771.0" fill="#3c79a6" stroke="#050f18" stroke-width="1.05" stroke-linejoin="round" />
<polygon points="839.2,786.6 849.1,777.2 848.6,771.0 842.4,776.9" fill="#3c79a6" stroke="#050f18" stroke-width="1.05" stroke-linejoin="round" />
<polygon points="853.3,791.9 863.1,782.6 857.0,774.2 850.8,780.1" fill="#2f6189" stroke="#050f18" stroke-width="1.05" stroke-linejoin="round" />
<polygon points="839.2,786.6 853.3,791.9 850.8,780.1 842.4,776.9" fill="#4385b3" stroke="#050f18" stroke-width="1.05" stroke-linejoin="round" />
<polygon points="842.4,776.9 850.8,780.1 857.0,774.2 848.6,771.0" fill="#70d6fd" stroke="#050f18" stroke-width="1.05" stroke-linejoin="round" />
<polygon points="863.8,782.9 877.9,788.2 871.8,779.8 863.4,776.6" fill="#3c79a6" stroke="#050f18" stroke-width="1.05" stroke-linejoin="round" />
<polygon points="854.0,792.2 863.8,782.9 863.4,776.6 857.2,782.5" fill="#3c79a6" stroke="#050f18" stroke-width="1.05" stroke-linejoin="round" />
<polygon points="868.0,797.5 877.9,788.2 871.8,779.8 865.6,785.7" fill="#2f6189" stroke="#050f18" stroke-width="1.05" stroke-linejoin="round" />
<polygon points="854.0,792.2 868.0,797.5 865.6,785.7 857.2,782.5" fill="#4385b3" stroke="#050f18" stroke-width="1.05" stroke-linejoin="round" />
<polygon points="857.2,782.5 865.6,785.7 871.8,779.8 863.4,776.6" fill="#70d6fd" stroke="#050f18" stroke-width="1.05" stroke-linejoin="round" />
<polygon points="878.6,788.5 892.7,793.8 886.6,785.4 878.2,782.2" fill="#3c79a6" stroke="#050f18" stroke-width="1.05" stroke-linejoin="round" />
<polygon points="868.8,797.8 878.6,788.5 878.2,782.2 872.0,788.1" fill="#3c79a6" stroke="#050f18" stroke-width="1.05" stroke-linejoin="round" />
<polygon points="882.8,803.1 892.7,793.8 886.6,785.4 880.4,791.3" fill="#2f6189" stroke="#050f18" stroke-width="1.05" stroke-linejoin="round" />
<polygon points="868.8,797.8 882.8,803.1 880.4,791.3 872.0,788.1" fill="#4385b3" stroke="#050f18" stroke-width="1.05" stroke-linejoin="round" />
<polygon points="872.0,788.1 880.4,791.3 886.6,785.4 878.2,782.2" fill="#70d6fd" stroke="#050f18" stroke-width="1.05" stroke-linejoin="round" />
<polygon points="893.4,794.1 907.5,799.4 901.4,791.1 893.0,787.9" fill="#3c79a6" stroke="#050f18" stroke-width="1.05" stroke-linejoin="round" />
<polygon points="883.5,803.4 893.4,794.1 893.0,787.9 886.8,793.7" fill="#3c79a6" stroke="#050f18" stroke-width="1.05" stroke-linejoin="round" />
<polygon points="897.6,808.8 907.5,799.4 901.4,791.1 895.2,796.9" fill="#2f6189" stroke="#050f18" stroke-width="1.05" stroke-linejoin="round" />
<polygon points="883.5,803.4 897.6,808.8 895.2,796.9 886.8,793.7" fill="#4385b3" stroke="#050f18" stroke-width="1.05" stroke-linejoin="round" />
<polygon points="886.8,793.7 895.2,796.9 901.4,791.1 893.0,787.9" fill="#70d6fd" stroke="#050f18" stroke-width="1.05" stroke-linejoin="round" />
<polygon points="887.9,825.6 898.3,815.7 897.7,809.2 887.2,819.1" fill="#2a5577" stroke="#050f18" stroke-width="0.95" stroke-linejoin="round" />
<polygon points="828.7,803.1 887.9,825.6 887.2,819.1 828.1,796.6" fill="#3b7299" stroke="#050f18" stroke-width="0.95" stroke-linejoin="round" />
<polygon points="828.1,796.6 887.2,819.1 897.7,809.2 838.5,786.7" fill="#3f7dab" stroke="#050f18" stroke-width="0.95" stroke-linejoin="round" />
<polygon points="838.6,787.1 852.7,792.5 846.6,784.1 838.2,780.9" fill="#3c79a6" stroke="#050f18" stroke-width="1.05" stroke-linejoin="round" />
<polygon points="828.7,796.5 838.6,787.1 838.2,780.9 832.0,786.8" fill="#3c79a6" stroke="#050f18" stroke-width="1.05" stroke-linejoin="round" />
<polygon points="842.8,801.8 852.7,792.5 846.6,784.1 840.4,789.9" fill="#2f6189" stroke="#050f18" stroke-width="1.05" stroke-linejoin="round" />
<polygon points="828.7,796.5 842.8,801.8 840.4,789.9 832.0,786.8" fill="#4385b3" stroke="#050f18" stroke-width="1.05" stroke-linejoin="round" />
<polygon points="832.0,786.8 840.4,789.9 846.6,784.1 838.2,780.9" fill="#70d6fd" stroke="#050f18" stroke-width="1.05" stroke-linejoin="round" />
<polygon points="853.4,792.7 867.4,798.1 861.4,789.7 852.9,786.5" fill="#3c79a6" stroke="#050f18" stroke-width="1.05" stroke-linejoin="round" />
<polygon points="843.5,802.1 853.4,792.7 852.9,786.5 846.7,792.4" fill="#3c79a6" stroke="#050f18" stroke-width="1.05" stroke-linejoin="round" />
<polygon points="857.6,807.4 867.4,798.1 861.4,789.7 855.2,795.6" fill="#2f6189" stroke="#050f18" stroke-width="1.05" stroke-linejoin="round" />
<polygon points="843.5,802.1 857.6,807.4 855.2,795.6 846.7,792.4" fill="#4385b3" stroke="#050f18" stroke-width="1.05" stroke-linejoin="round" />
<polygon points="846.7,792.4 855.2,795.6 861.4,789.7 852.9,786.5" fill="#70d6fd" stroke="#050f18" stroke-width="1.05" stroke-linejoin="round" />
<polygon points="868.2,798.4 882.2,803.7 876.1,795.3 867.7,792.1" fill="#3c79a6" stroke="#050f18" stroke-width="1.05" stroke-linejoin="round" />
<polygon points="858.3,807.7 868.2,798.4 867.7,792.1 861.5,798.0" fill="#3c79a6" stroke="#050f18" stroke-width="1.05" stroke-linejoin="round" />
<polygon points="872.4,813.0 882.2,803.7 876.1,795.3 869.9,801.2" fill="#2f6189" stroke="#050f18" stroke-width="1.05" stroke-linejoin="round" />
<polygon points="858.3,807.7 872.4,813.0 869.9,801.2 861.5,798.0" fill="#4385b3" stroke="#050f18" stroke-width="1.05" stroke-linejoin="round" />
<polygon points="861.5,798.0 869.9,801.2 876.1,795.3 867.7,792.1" fill="#70d6fd" stroke="#050f18" stroke-width="1.05" stroke-linejoin="round" />
<polygon points="883.0,804.0 897.0,809.3 890.9,800.9 882.5,797.7" fill="#3c79a6" stroke="#050f18" stroke-width="1.05" stroke-linejoin="round" />
<polygon points="873.1,813.3 883.0,804.0 882.5,797.7 876.3,803.6" fill="#3c79a6" stroke="#050f18" stroke-width="1.05" stroke-linejoin="round" />
<polygon points="887.1,818.6 897.0,809.3 890.9,800.9 884.7,806.8" fill="#2f6189" stroke="#050f18" stroke-width="1.05" stroke-linejoin="round" />
<polygon points="873.1,813.3 887.1,818.6 884.7,806.8 876.3,803.6" fill="#4385b3" stroke="#050f18" stroke-width="1.05" stroke-linejoin="round" />
<polygon points="876.3,803.6 884.7,806.8 890.9,800.9 882.5,797.7" fill="#70d6fd" stroke="#050f18" stroke-width="1.05" stroke-linejoin="round" />
<polygon points="877.4,835.4 887.9,825.6 887.2,819.1 876.8,828.9" fill="#2a5577" stroke="#050f18" stroke-width="0.95" stroke-linejoin="round" />
<polygon points="818.3,813.0 877.4,835.4 876.8,828.9 817.6,806.5" fill="#3b7299" stroke="#050f18" stroke-width="0.95" stroke-linejoin="round" />
<polygon points="817.6,806.5 876.8,828.9 887.2,819.1 828.1,796.6" fill="#3f7dab" stroke="#050f18" stroke-width="0.95" stroke-linejoin="round" />
<polygon points="828.1,797.0 842.2,802.4 836.1,794.0 827.7,790.8" fill="#3c79a6" stroke="#050f18" stroke-width="1.05" stroke-linejoin="round" />
<polygon points="818.3,806.3 828.1,797.0 827.7,790.8 821.5,796.6" fill="#3c79a6" stroke="#050f18" stroke-width="1.05" stroke-linejoin="round" />
<polygon points="832.3,811.7 842.2,802.4 836.1,794.0 829.9,799.8" fill="#2f6189" stroke="#050f18" stroke-width="1.05" stroke-linejoin="round" />
<polygon points="818.3,806.3 832.3,811.7 829.9,799.8 821.5,796.6" fill="#4385b3" stroke="#050f18" stroke-width="1.05" stroke-linejoin="round" />
<polygon points="821.5,796.6 829.9,799.8 836.1,794.0 827.7,790.8" fill="#70d6fd" stroke="#050f18" stroke-width="1.05" stroke-linejoin="round" />
<polygon points="842.9,802.6 857.0,808.0 850.9,799.6 842.5,796.4" fill="#3c79a6" stroke="#050f18" stroke-width="1.05" stroke-linejoin="round" />
<polygon points="833.1,812.0 842.9,802.6 842.5,796.4 836.3,802.3" fill="#3c79a6" stroke="#050f18" stroke-width="1.05" stroke-linejoin="round" />
<polygon points="847.1,817.3 857.0,808.0 850.9,799.6 844.7,805.5" fill="#2f6189" stroke="#050f18" stroke-width="1.05" stroke-linejoin="round" />
<polygon points="833.1,812.0 847.1,817.3 844.7,805.5 836.3,802.3" fill="#4385b3" stroke="#050f18" stroke-width="1.05" stroke-linejoin="round" />
<polygon points="836.3,802.3 844.7,805.5 850.9,799.6 842.5,796.4" fill="#70d6fd" stroke="#050f18" stroke-width="1.05" stroke-linejoin="round" />
<polygon points="857.7,808.2 871.8,813.6 865.7,805.2 857.3,802.0" fill="#3c79a6" stroke="#050f18" stroke-width="1.05" stroke-linejoin="round" />
<polygon points="847.9,817.6 857.7,808.2 857.3,802.0 851.1,807.9" fill="#3c79a6" stroke="#050f18" stroke-width="1.05" stroke-linejoin="round" />
<polygon points="861.9,822.9 871.8,813.6 865.7,805.2 859.5,811.1" fill="#2f6189" stroke="#050f18" stroke-width="1.05" stroke-linejoin="round" />
<polygon points="847.9,817.6 861.9,822.9 859.5,811.1 851.1,807.9" fill="#4385b3" stroke="#050f18" stroke-width="1.05" stroke-linejoin="round" />
<polygon points="851.1,807.9 859.5,811.1 865.7,805.2 857.3,802.0" fill="#70d6fd" stroke="#050f18" stroke-width="1.05" stroke-linejoin="round" />
<polygon points="872.5,813.9 886.5,819.2 880.5,810.8 872.0,807.6" fill="#3c79a6" stroke="#050f18" stroke-width="1.05" stroke-linejoin="round" />
<polygon points="862.6,823.2 872.5,813.9 872.0,807.6 865.8,813.5" fill="#3c79a6" stroke="#050f18" stroke-width="1.05" stroke-linejoin="round" />
<polygon points="876.7,828.5 886.5,819.2 880.5,810.8 874.3,816.7" fill="#2f6189" stroke="#050f18" stroke-width="1.05" stroke-linejoin="round" />
<polygon points="862.6,823.2 876.7,828.5 874.3,816.7 865.8,813.5" fill="#4385b3" stroke="#050f18" stroke-width="1.05" stroke-linejoin="round" />
<polygon points="865.8,813.5 874.3,816.7 880.5,810.8 872.0,807.6" fill="#70d6fd" stroke="#050f18" stroke-width="1.05" stroke-linejoin="round" />
<polygon points="1607.7,811.0 1607.7,828.3 1506.6,912.9 1507.5,907.0" fill="#2d170a" stroke="#140801" stroke-width="1.05" stroke-linejoin="round" />
<polygon points="1597.8,791.3 1625.7,776.9 1627.5,788.6 1607.7,811.0 1507.5,907.0 1507.0,902.8 1560.0,847.9 1573.5,831.7" fill="#40210e" stroke="#140801" stroke-width="1.05" stroke-linejoin="round" />
<polygon points="1589.7,788.6 1597.8,791.3 1573.5,831.7 1560.0,847.9 1507.0,902.8 1505.2,898.3 1559.1,847.3 1566.0,825.4 1585.0,787.6" fill="#864820" stroke="#140801" stroke-width="0.8" stroke-linejoin="round" />
<polygon points="1187.1,778.6 1505.2,898.3 1507.2,902.8 1507.7,907.0 1506.8,913.1 1185.3,792.1 1184.4,785.8" fill="#6f3410" stroke="#140801" stroke-width="1.05" stroke-linejoin="round" />
<line x1="1185.5" y1="783.0" x2="1505.6" y2="903.8" stroke="#140801" stroke-width="0.7" />
<line x1="1185.0" y1="787.5" x2="1505.9" y2="908.2" stroke="#2a1204" stroke-width="1.4" />
<polygon points="1187.1,778.6 1242.0,728.2 1288.8,672.8 1286.5,671.5 1239.5,727.0 1184.4,785.8" fill="#6a3210" stroke="#140801" stroke-width="0.7" stroke-linejoin="round" />
<path d="M1187.1 778.6 L1242.0 728.2 L1254.6 724.6 L1269.9 715.6 L1508.4 802.5 L1566.0 825.4 L1573.0 829.4 L1559.1 847.3 L1505.4 899.0Z M1261.2 729.1 L1304.2 746.5 L1315.3 735.5 L1458.8 789.6 L1447.3 799.4 L1476.7 809.6 L1465.6 820.7 L1469.9 822.0 L1459.2 831.8 L1449.0 827.9 L1438.8 837.3 L1445.2 840.3 L1434.1 850.5 L1392.4 834.3 L1381.7 844.1 L1252.6 795.6 L1263.3 785.3 L1221.9 769.6 L1232.6 760.6 L1247.5 752.5 L1244.5 750.8 L1254.8 741.0 L1250.5 738.9Z M1495.5 817.5 L1552.1 839.3 L1501.4 888.0 L1441.8 866.2Z" fill="#8e4e27" fill-rule="evenodd" stroke="#140801" stroke-width="0.9" stroke-linejoin="round"/>
<clipPath id="cm"><polygon points="1261.2,729.1 1304.2,746.5 1315.3,735.5 1458.8,789.6 1447.3,799.4 1476.7,809.6 1465.6,820.7 1469.9,822.0 1459.2,831.8 1449.0,827.9 1438.8,837.3 1445.2,840.3 1434.1,850.5 1392.4,834.3 1381.7,844.1 1252.6,795.6 1263.3,785.3 1221.9,769.6 1232.6,760.6 1247.5,752.5 1244.5,750.8 1254.8,741.0 1250.5,738.9"/></clipPath>
<g clip-path="url(#cm)">
<polygon points="1261.2,729.1 1304.2,746.5 1304.2,754.5 1261.2,737.1" fill="#5b3019" stroke="#140801" stroke-width="0.6" stroke-linejoin="round" />
<polygon points="1304.2,746.5 1315.3,735.5 1315.3,743.5 1304.2,754.5" fill="#3b1d0b" stroke="#140801" stroke-width="0.6" stroke-linejoin="round" />
<polygon points="1315.3,735.5 1458.8,789.6 1458.8,797.6 1315.3,743.5" fill="#5b3019" stroke="#140801" stroke-width="0.6" stroke-linejoin="round" />
<polygon points="1458.8,789.6 1447.3,799.4 1447.3,807.4 1458.8,797.6" fill="#3b1d0b" stroke="#140801" stroke-width="0.6" stroke-linejoin="round" />
<polygon points="1447.3,799.4 1476.7,809.6 1476.7,817.6 1447.3,807.4" fill="#5b3019" stroke="#140801" stroke-width="0.6" stroke-linejoin="round" />
<polygon points="1476.7,809.6 1465.6,820.7 1465.6,828.7 1476.7,817.6" fill="#3b1d0b" stroke="#140801" stroke-width="0.6" stroke-linejoin="round" />
<polygon points="1465.6,820.7 1469.9,822.0 1469.9,830.0 1465.6,828.7" fill="#5b3019" stroke="#140801" stroke-width="0.6" stroke-linejoin="round" />
<polygon points="1469.9,822.0 1459.2,831.8 1459.2,839.8 1469.9,830.0" fill="#3b1d0b" stroke="#140801" stroke-width="0.6" stroke-linejoin="round" />
<polygon points="1459.2,831.8 1449.0,827.9 1449.0,835.9 1459.2,839.8" fill="#5b3019" stroke="#140801" stroke-width="0.6" stroke-linejoin="round" />
<polygon points="1449.0,827.9 1438.8,837.3 1438.8,845.3 1449.0,835.9" fill="#3b1d0b" stroke="#140801" stroke-width="0.6" stroke-linejoin="round" />
<polygon points="1438.8,837.3 1445.2,840.3 1445.2,848.3 1438.8,845.3" fill="#5b3019" stroke="#140801" stroke-width="0.6" stroke-linejoin="round" />
<polygon points="1445.2,840.3 1434.1,850.5 1434.1,858.5 1445.2,848.3" fill="#3b1d0b" stroke="#140801" stroke-width="0.6" stroke-linejoin="round" />
<polygon points="1434.1,850.5 1392.4,834.3 1392.4,842.3 1434.1,858.5" fill="#5b3019" stroke="#140801" stroke-width="0.6" stroke-linejoin="round" />
<polygon points="1392.4,834.3 1381.7,844.1 1381.7,852.1 1392.4,842.3" fill="#3b1d0b" stroke="#140801" stroke-width="0.6" stroke-linejoin="round" />
<polygon points="1381.7,844.1 1252.6,795.6 1252.6,803.6 1381.7,852.1" fill="#5b3019" stroke="#140801" stroke-width="0.6" stroke-linejoin="round" />
<polygon points="1252.6,795.6 1263.3,785.3 1263.3,793.3 1252.6,803.6" fill="#3b1d0b" stroke="#140801" stroke-width="0.6" stroke-linejoin="round" />
<polygon points="1263.3,785.3 1221.9,769.6 1221.9,777.6 1263.3,793.3" fill="#5b3019" stroke="#140801" stroke-width="0.6" stroke-linejoin="round" />
<polygon points="1221.9,769.6 1232.6,760.6 1232.6,768.6 1221.9,777.6" fill="#3b1d0b" stroke="#140801" stroke-width="0.6" stroke-linejoin="round" />
<polygon points="1232.6,760.6 1247.5,752.5 1247.5,760.5 1232.6,768.6" fill="#3b1d0b" stroke="#140801" stroke-width="0.6" stroke-linejoin="round" />
<polygon points="1247.5,752.5 1244.5,750.8 1244.5,758.8 1247.5,760.5" fill="#5b3019" stroke="#140801" stroke-width="0.6" stroke-linejoin="round" />
<polygon points="1244.5,750.8 1254.8,741.0 1254.8,749.0 1244.5,758.8" fill="#3b1d0b" stroke="#140801" stroke-width="0.6" stroke-linejoin="round" />
<polygon points="1254.8,741.0 1250.5,738.9 1250.5,746.9 1254.8,749.0" fill="#5b3019" stroke="#140801" stroke-width="0.6" stroke-linejoin="round" />
<polygon points="1250.5,738.9 1261.2,729.1 1261.2,737.1 1250.5,746.9" fill="#3b1d0b" stroke="#140801" stroke-width="0.6" stroke-linejoin="round" />
</g>
<polygon points="1261.2,729.1 1304.2,746.5 1315.3,735.5 1458.8,789.6 1447.3,799.4 1476.7,809.6 1465.6,820.7 1469.9,822.0 1459.2,831.8 1449.0,827.9 1438.8,837.3 1445.2,840.3 1434.1,850.5 1392.4,834.3 1381.7,844.1 1252.6,795.6 1263.3,785.3 1221.9,769.6 1232.6,760.6 1247.5,752.5 1244.5,750.8 1254.8,741.0 1250.5,738.9" fill="none" stroke="#140801" stroke-width="0.9"/>
<clipPath id="cs"><polygon points="1495.5,817.5 1552.1,839.3 1501.4,888.0 1441.8,866.2"/></clipPath>
<g clip-path="url(#cs)">
<polygon points="1495.5,817.5 1552.1,839.3 1552.1,846.3 1495.5,824.5" fill="#5b3019" stroke="#140801" stroke-width="0.6" stroke-linejoin="round" />
<polygon points="1552.1,839.3 1501.4,888.0 1501.4,895.0 1552.1,846.3" fill="#3b1d0b" stroke="#140801" stroke-width="0.6" stroke-linejoin="round" />
<polygon points="1501.4,888.0 1441.8,866.2 1441.8,873.2 1501.4,895.0" fill="#5b3019" stroke="#140801" stroke-width="0.6" stroke-linejoin="round" />
<polygon points="1441.8,866.2 1495.5,817.5 1495.5,824.5 1441.8,873.2" fill="#3b1d0b" stroke="#140801" stroke-width="0.6" stroke-linejoin="round" />
</g>
<polygon points="1495.5,817.5 1552.1,839.3 1501.4,888.0 1441.8,866.2" fill="none" stroke="#140801" stroke-width="0.9"/>
<polygon points="1540.5,828.5 1544.5,830.0 1543.8,831.6 1539.8,830.1" fill="#1a0b02" stroke="#140801" stroke-width="0.4" stroke-linejoin="round" />
<polygon points="1288.8,672.8 1269.9,715.6 1254.6,724.6 1242.0,728.2" fill="#733610" stroke="#140801" stroke-width="0.8" stroke-linejoin="round" />
<polygon points="1288.8,672.8 1529.3,764.7 1508.4,802.5 1269.9,715.6" fill="#7e3c15" stroke="#140801" stroke-width="1.05" stroke-linejoin="round" />
<polygon points="1310.4,657.1 1551.0,747.9 1529.3,764.7 1288.8,672.8" fill="#7b3913" stroke="#140801" stroke-width="1.05" stroke-linejoin="round" />
<line x1="1310.4" y1="657.1" x2="1625.7" y2="776.9" stroke="#140801" stroke-width="2.0" />
<polygon points="1551.0,747.9 1611.5,770.7 1585.0,787.6 1566.0,825.4 1508.4,802.5 1529.3,764.7" fill="#6a320f" stroke="#140801" stroke-width="1.05" stroke-linejoin="round" />
<clipPath id="cv"><polygon points="1551.0,747.9 1611.5,770.7 1585.0,787.6 1566.0,825.4 1508.4,802.5 1529.3,764.7"/></clipPath><g clip-path="url(#cv)">
<polyline points="1555.0,749.4 1533.0,766.2 1512.2,804.0" fill="none" stroke="#170902" stroke-width="2.1" stroke-linejoin="round" />
<polyline points="1559.1,750.9 1536.7,767.8 1516.1,805.6" fill="none" stroke="#170902" stroke-width="2.1" stroke-linejoin="round" />
<polyline points="1563.1,752.5 1540.4,769.3 1519.9,807.1" fill="none" stroke="#170902" stroke-width="2.1" stroke-linejoin="round" />
<polyline points="1567.1,754.0 1544.2,770.8 1523.8,808.6" fill="none" stroke="#170902" stroke-width="2.1" stroke-linejoin="round" />
<polyline points="1571.2,755.5 1547.9,772.3 1527.6,810.1" fill="none" stroke="#170902" stroke-width="2.1" stroke-linejoin="round" />
<polyline points="1575.2,757.0 1551.6,773.9 1531.4,811.7" fill="none" stroke="#170902" stroke-width="2.1" stroke-linejoin="round" />
<polyline points="1579.2,758.5 1555.3,775.4 1535.3,813.2" fill="none" stroke="#170902" stroke-width="2.1" stroke-linejoin="round" />
<polyline points="1583.3,760.1 1559.0,776.9 1539.1,814.7" fill="none" stroke="#170902" stroke-width="2.1" stroke-linejoin="round" />
<polyline points="1587.3,761.6 1562.7,778.4 1543.0,816.2" fill="none" stroke="#170902" stroke-width="2.1" stroke-linejoin="round" />
<polyline points="1591.3,763.1 1566.4,780.0 1546.8,817.8" fill="none" stroke="#170902" stroke-width="2.1" stroke-linejoin="round" />
<polyline points="1595.4,764.6 1570.1,781.5 1550.6,819.3" fill="none" stroke="#170902" stroke-width="2.1" stroke-linejoin="round" />
<polyline points="1599.4,766.1 1573.9,783.0 1554.5,820.8" fill="none" stroke="#170902" stroke-width="2.1" stroke-linejoin="round" />
<polyline points="1603.4,767.7 1577.6,784.5 1558.3,822.3" fill="none" stroke="#170902" stroke-width="2.1" stroke-linejoin="round" />
<polyline points="1607.5,769.2 1581.3,786.1 1562.2,823.9" fill="none" stroke="#170902" stroke-width="2.1" stroke-linejoin="round" />
</g>
<polygon points="1530.3,772.7 1578.0,788.6 1569.0,805.5 1523.3,788.6" fill="#7a3a14" stroke="#140801" stroke-width="0.8" stroke-linejoin="round" />
<polygon points="1578.0,788.6 1569.0,805.5 1566.5,804.2 1575.0,788.0" fill="#2a1204" stroke="#140801" stroke-width="0.4" stroke-linejoin="round" />
<polygon points="1597.8,791.3 1625.7,776.9 1611.5,770.7 1585.0,787.6" fill="#8e4e27" stroke="#140801" stroke-width="1.05" stroke-linejoin="round" />
<defs><linearGradient id="vl" x1="0" y1="0" x2="0" y2="1"><stop offset="0" stop-color="#f3f3f3"/><stop offset="1" stop-color="#cfcfcf"/></linearGradient><linearGradient id="vf" x1="0" y1="0" x2="0" y2="1"><stop offset="0" stop-color="#efefef"/><stop offset="1" stop-color="#d2d2d2"/></linearGradient></defs>
<ellipse cx="1856" cy="181" rx="34" ry="9" fill="#555" fill-opacity="0.22" filter="url(#b5)"/>
<polygon points="1854.0,110.0 1892.5,121.5 1862.0,138.0 1822.0,124.5" fill="#f2f2f2"/>
<polygon points="1822.0,124.5 1862.0,138.0 1862.5,184.5 1825.5,167.0" fill="url(#vl)"/>
<polygon points="1862.0,138.0 1892.5,121.5 1890.0,163.0 1862.5,184.5" fill="url(#vf)"/>
<path d="M1854.0 110.0L1892.5 121.5L1862.0 138.0L1822.0 124.5ZM1862.0 138.0L1862.5 184.5M1822.0 124.5L1825.5 167.0L1862.5 184.5L1890.0 163.0" fill="none" stroke="#b5b5b5" stroke-width="1" stroke-dasharray="7 3"/>
<line x1="1892.5" y1="121.5" x2="1890.0" y2="163.0" stroke="#b5b5b5" stroke-dasharray="7 3"/>
<polygon points="1855,135.5 1861.5,132.8 1868.5,135.5 1868.3,145 1862,148 1855.2,145" fill="#a9dff3" fill-opacity="0.95"/>
<path d="M1855 135.5L1862 138L1868.5 135.5M1862 138V148" fill="none" stroke="#c9c9c9" stroke-width="0.8"/>
<text class="vc" font-size="11.5" transform="matrix(1 0.36 0 1 1832 154)" textLength="19" lengthAdjust="spacingAndGlyphs">LEFT</text>
<text class="vc" font-size="11" transform="matrix(0.62 -0.62 0 1 1867 166)" textLength="34" lengthAdjust="spacingAndGlyphs" font-style="italic">FRONT</text>
<text class="vc" font-size="9"  transform="matrix(-0.75 0.5 -0.9 -0.3 1861 117)" textLength="20" lengthAdjust="spacingAndGlyphs">TOP</text>
</svg>
<div id="blackbar" class="abs"></div><div id="rstrip" class="abs"></div><div class="abs" style="left:1920px;top:1036px;width:8px;height:20px;background:#fff;border-top:1px solid #c4c4c4"></div>
<div id="title" class="abs"><span class="t">pc-8001mk2_001*</span></div>
<div id="toolbar" class="abs"></div>
<div id="brand1" class="abs">AUTODESK<span style="font-size:8px;vertical-align:top;position:relative;top:-3px">&#174;</span></div>
<div id="brand2" class="abs">123D<span style="font-size:8px;vertical-align:top;position:relative;top:-4px">&#176;</span> DESIGN</div>
<div class="abs btn" style="left:1699px;width:101px">Go Premium</div>
<div class="abs btn" style="left:1806px;width:69px">Sign In</div>
<div id="help" class="abs">?</div>
<div id="scroll" class="abs"><i></i></div>
<div id="nav" class="abs"></div>
<div class="abs sbox" style="left:1738px;width:68px">Snap :1</div>
<div class="abs sbox" style="left:1818px;width:68px;letter-spacing:-0.45px;padding-left:2px">Units : mm</div>
<div id="bottom" class="abs"><i style="left:48px;width:108px;background:#f1f1f1"></i><i style="left:156px;width:20px;background:#fff"></i><i style="left:176px;width:196px;background:linear-gradient(90deg,#a8a890,#d4d0b8)"></i><i style="left:372px;width:20px;background:#fff"></i><i style="left:392px;width:196px;background:linear-gradient(90deg,#9da3b8,#b9b9b3)"></i><i style="left:588px;width:20px;background:#fff"></i><i style="left:608px;width:294px;background:#8f8780"></i><i style="left:902px;width:20px;background:#fff"></i><i style="left:946px;width:24px;background:#e8c9a0"></i><i style="left:970px;width:104px;background:#2b3145;color:#d5d9e6;font-size:9px;line-height:9px;font-style:normal;letter-spacing:2px;text-indent:14px;white-space:nowrap">1 2 3</i><i style="left:1074px;width:40px;background:#e8c9a0"></i></div>
<svg class="abs" style="left:0;top:0" width="1928" height="1056" viewBox="0 0 1928 1056">
<defs>
<g id="cube"><polygon points="0,-9 9,-5 0,-1 -9,-5" fill="#fff" stroke="#444" stroke-width="1"/><polygon points="-9,-5 0,-1 0,11 -9,6.5" fill="#6e6e6e" stroke="#444" stroke-width="0.8"/><polygon points="9,-5 0,-1 0,11 9,6.5" fill="#2e2e2e" stroke="#2a2a2a" stroke-width="0.8"/></g>
<g id="scube"><polygon points="0,-4 4.5,-2 0,0 -4.5,-2" fill="#fff" stroke="#444" stroke-width="0.7"/><polygon points="-4.5,-2 0,0 0,5.5 -4.5,3.3" fill="#6e6e6e" stroke="#444" stroke-width="0.6"/><polygon points="4.5,-2 0,0 0,5.5 4.5,3.3" fill="#3c3c3c" stroke="#333" stroke-width="0.6"/></g>
<path id="tri" d="M0 3L3 0L3 3Z" fill="#9a9a9a"/>
</defs>
<path d="M635.5 58L644 52.5L644 63.3Z" fill="#1c1c1c"/><path d="M643.5 58.1C649 57.6 652.5 58.5 655.8 62.3" fill="none" stroke="#1c1c1c" stroke-width="2.3"/>
<path d="M697.5 58L689 52.5L689 63.3Z" fill="#b7b7b7"/><path d="M689.5 58.1C684 57.6 680.5 58.5 677.2 62.3" fill="none" stroke="#b7b7b7" stroke-width="2.3"/>
<line x1="730.5" y1="47" x2="730.5" y2="72" stroke="#9c9c9c" stroke-width="1"/>
<line x1="816.5" y1="47" x2="816.5" y2="72" stroke="#9c9c9c" stroke-width="1"/>
<line x1="1246.5" y1="47" x2="1246.5" y2="72" stroke="#9c9c9c" stroke-width="1"/>
<rect x="764.5" y="49.5" width="20" height="20" fill="none" stroke="#333" stroke-width="1" stroke-dasharray="1 1.5"/>
<use href="#cube" transform="translate(773 61) scale(0.68)"/>
<path d="M781.5 46.5v8M777.5 50.5h8" stroke="#222" stroke-width="1" fill="none"/><path d="M781.5 45.2l-1.5 2h3zM781.5 55.8l-1.5 -2h3zM776.2 50.5l2 -1.5v3zM786.8 50.5l-2 -1.5v3z" fill="#222"/>
<circle cx="866" cy="55" r="6.5" fill="#fff" stroke="#444" stroke-width="1"/>
<use href="#cube" transform="translate(857 60) scale(0.86)"/>
<path d="M903 52.6C899 49.6 893.2 51.5 893.2 56.5C893.2 60 895 62.8 896.8 63.6C898.5 66 900 67.4 901.8 65.8" fill="none" stroke="#333" stroke-width="1.2"/>
<circle cx="903.5" cy="53.3" r="1.9" fill="#222"/><circle cx="896.6" cy="63.6" r="1.9" fill="#222"/>
<path d="M913.5 48L917.5 51L908 63L903 65.5L904.5 60Z" fill="#2a2a2a"/><path d="M905 60.5l3 2.5" stroke="#efefef" stroke-width="0.8"/>
<use href="#cube" transform="translate(946 60) scale(0.86)"/>
<path d="M949.5 53L955 45.5L957 47L952 55Z" fill="#222"/>
<use href="#cube" transform="translate(986 60) scale(0.86)"/>
<path d="M994.4 48v7.6h6.8" fill="none" stroke="#222" stroke-width="1.1"/><path d="M994.4 46l-1.9 2.8h3.8zM1003.2 55.6l-2.8 -1.9v3.8z" fill="#222"/>
<use href="#scube" transform="translate(1026.5 53) scale(0.86)"/>
<use href="#scube" transform="translate(1037 53) scale(0.86)"/>
<use href="#scube" transform="translate(1026.5 63.5) scale(0.86)"/>
<use href="#scube" transform="translate(1037 63.5) scale(0.86)"/>
<circle cx="1080" cy="56" r="5.5" fill="#fff" stroke="#444" stroke-width="1"/>
<use href="#cube" transform="translate(1073 62) scale(0.62)"/>
<rect x="1065" y="49" width="2" height="2" fill="#222"/>
<rect x="1085" y="49" width="2" height="2" fill="#222"/>
<rect x="1065" y="69" width="2" height="2" fill="#222"/>
<rect x="1085" y="69" width="2" height="2" fill="#222"/>
<polygon points="1109.5,55.5 1118,59.5 1118,69.5 1109.5,65.5" fill="#6b6b6b" stroke="#444" stroke-width="0.7"/>
<polygon points="1118,59.5 1129,54 1129,64 1118,69.5" fill="#2b2b2b" stroke="#2b2b2b" stroke-width="0.7"/>
<polygon points="1109.5,55.5 1121,50 1129,54 1118,59.5" fill="#fff" stroke="#333" stroke-width="0.8"/>
<path d="M1115.5 52.7L1123.7 56.7" stroke="#333" stroke-width="0.9"/>
<path d="M1152.5 58L1160.5 51.5A6.3 6.3 0 0 1 1169 60.5L1161.5 67" fill="none" stroke="#333" stroke-width="4.6"/>
<path d="M1152.5 58L1160.5 51.5A6.3 6.3 0 0 1 1169 60.5L1161.5 67" fill="none" stroke="#f2f2f2" stroke-width="2.6"/>
<path d="M1151 56.5l3.2 3.6M1160 65.2l3.2 3.6" stroke="#222" stroke-width="4.2"/>
<path d="M1194.6 49.5h5v14h14v5h-19z" fill="#f6f6f6" stroke="#1e1e1e" stroke-width="1.3"/>
<path d="M1201.5 64v2.6M1203.5 64v2M1205.5 64v2.6M1207.5 64v2M1209.5 64v2.6M1211.5 64v2M1199.6 52h-2.4M1199.6 54h-1.8M1199.6 56h-2.4M1199.6 58h-1.8M1199.6 60h-2.4M1199.6 62h-1.8" stroke="#1e1e1e" stroke-width="0.9"/>
<polygon points="1280,53 1290,49 1300,53 1300,65 1290,69.5 1280,65" fill="#fff" stroke="#333" stroke-width="0.7"/>
<path d="M1280 55.0L1290 59.0" fill="none" stroke="#222" stroke-width="1.3"/>
<path d="M1280 57.6L1290 61.6" fill="none" stroke="#222" stroke-width="1.3"/>
<path d="M1280 60.2L1290 64.2" fill="none" stroke="#222" stroke-width="1.3"/>
<path d="M1280 62.8L1290 66.8" fill="none" stroke="#222" stroke-width="1.3"/>
<path d="M1280 65.4L1290 69.4" fill="none" stroke="#222" stroke-width="1.3"/>
<path d="M1290 57v12.5" stroke="#333" stroke-width="0.7"/>
<path d="M1291 61.5l9 -7M1291 64.5l9 -7M1291 67.5l9 -7M1293.5 68.5l6.5 -5M1291 58.6l5 -3.9" stroke="#222" stroke-width="1"/>
<use href="#tri" x="791" y="80"/>
<use href="#tri" x="878" y="80"/>
<use href="#tri" x="921" y="80"/>
<use href="#tri" x="964" y="80"/>
<use href="#tri" x="1007" y="80"/>
<use href="#tri" x="1050" y="80"/>
<use href="#tri" x="1093" y="80"/>
<use href="#tri" x="1136" y="80"/>
<path d="M199.5 62.6l5.7 4.2l5.7 -4.2" fill="none" stroke="#222" stroke-width="2"/>
<defs><linearGradient id="lg" x1="0" y1="0" x2="1" y2="1"><stop offset="0" stop-color="#c2d3db"/><stop offset="1" stop-color="#8aa8b7"/></linearGradient></defs>
<rect x="8" y="40" width="43" height="43" rx="6" fill="url(#lg)"/>
<polygon points="46.7,49.8 50.8,55 50.8,74 36,82 30.8,75.5" fill="#6c9bb2" fill-opacity="0.9"/>
<polygon points="13.3,49.8 46.7,49.8 30.8,75.8" fill="#1a9fd6"/>
<polygon points="13.3,49.8 46.7,49.8 30,57.5" fill="#b4e2f3"/>
<polygon points="46.7,49.8 30,57.5 30.8,75.8" fill="#0f6b96"/>
<polygon points="3,13 18.5,13 10.5,25.5" fill="#1b9bd3"/><polygon points="18.5,13 10,16.5 10.5,25.5" fill="#126b96"/><polygon points="3,13 18.5,13 10,16.5" fill="#7fd0ef"/>
<path d="M1798.5 18.5h11" stroke="#111" stroke-width="1"/>
<rect x="1844.5" y="16.5" width="7" height="7" fill="none" stroke="#111" stroke-width="1"/><path d="M1846.5 16.5v-2h7v7h-2" fill="none" stroke="#111" stroke-width="1"/>
<path d="M1890 13l10.5 10.5M1900.5 13l-10.5 10.5" stroke="#111" stroke-width="1.1"/>
<path d="M1871 227.5v19M1861.5 237h19" stroke="#222" stroke-width="1.1"/><path d="M1871 226l-2.3 3.3h4.6zM1871 248l-2.3 -3.3h4.6zM1860 237l3.3 -2.3v4.6zM1882 237l-3.3 -2.3v4.6z" fill="#222"/>
<use href="#cube" transform="translate(1871 272) scale(0.62)"/>
<path d="M1872.5 262.6A9.5 9.5 0 0 1 1880.4 270.5M1861.6 273.5A9.5 9.5 0 0 0 1869.5 281.4" fill="none" stroke="#222" stroke-width="1.2"/><path d="M1869.3 262.4l4 -2.4v4.8zM1872.7 281.6l-4 -2.4v4.8z" fill="#222"/>
<circle cx="1869.2" cy="305.3" r="6.9" fill="#fff" stroke="#222" stroke-width="1.3"/><path d="M1874.4 310.4l4.8 4.4" stroke="#222" stroke-width="3.4"/>
<path d="M1860 327.5h22M1860 476.5h22" stroke="#b0b0b0" stroke-width="1"/>
<use href="#cube" transform="translate(1871 351) scale(0.62)"/>
<path d="M1861.5 346v-4.5h4.5M1876 341.5h4.5v4.5M1880.5 356v4.5h-4.5M1866 360.5h-4.5v-4.5" fill="none" stroke="#222" stroke-width="1.2"/>
<circle cx="1875" cy="382" r="5.2" fill="#fff" stroke="#444" stroke-width="0.9"/>
<use href="#cube" transform="translate(1869 387) scale(0.78)"/>
<path d="M1860.5 421.5C1866 414.5 1876 414.5 1881.5 421.5C1876 428.5 1866 428.5 1860.5 421.5Z" fill="#fff" stroke="#222" stroke-width="1.3"/><circle cx="1871" cy="421.5" r="4" fill="#555"/>
<path d="M1860.6 450h16.5l4.6 12.4h-18.3z M1861.6 454.2h17 M1862.6 458.3h17.6 M1866 450l3.2 12.4 M1871.5 450l3.8 12.4" fill="none" stroke="#222" stroke-width="1.35"/>
<path d="M1867.5 452C1871 446.8 1878.5 446.8 1882 452C1878.5 457.2 1871 457.2 1867.5 452Z" fill="#fff" stroke="#222" stroke-width="1.1"/><circle cx="1874.7" cy="452" r="2.9" fill="#555"/>
<use href="#cube" transform="translate(1869 503) scale(0.72)"/>
<path d="M1872 497l5 -5a3 3 0 0 1 4.5 4.5l-4.5 4.5" fill="none" stroke="#444" stroke-width="2.4"/>
<path d="M1861 512l21 -22" stroke="#222" stroke-width="1.6"/>
<rect x="1860.5" y="492" width="1.6" height="1.6" fill="#222"/>
<rect x="1882" y="512" width="1.6" height="1.6" fill="#222"/>
<rect x="1860.5" y="512" width="1.6" height="1.6" fill="#222"/>
<path d="M1913.5 588.5l5 -4.5v9z" fill="#fff"/>
<path d="M1497 1050h10l-5 5zM1515 1050h10l-5 5z" fill="#d8d8d8"/>
</svg>
</body></html>
